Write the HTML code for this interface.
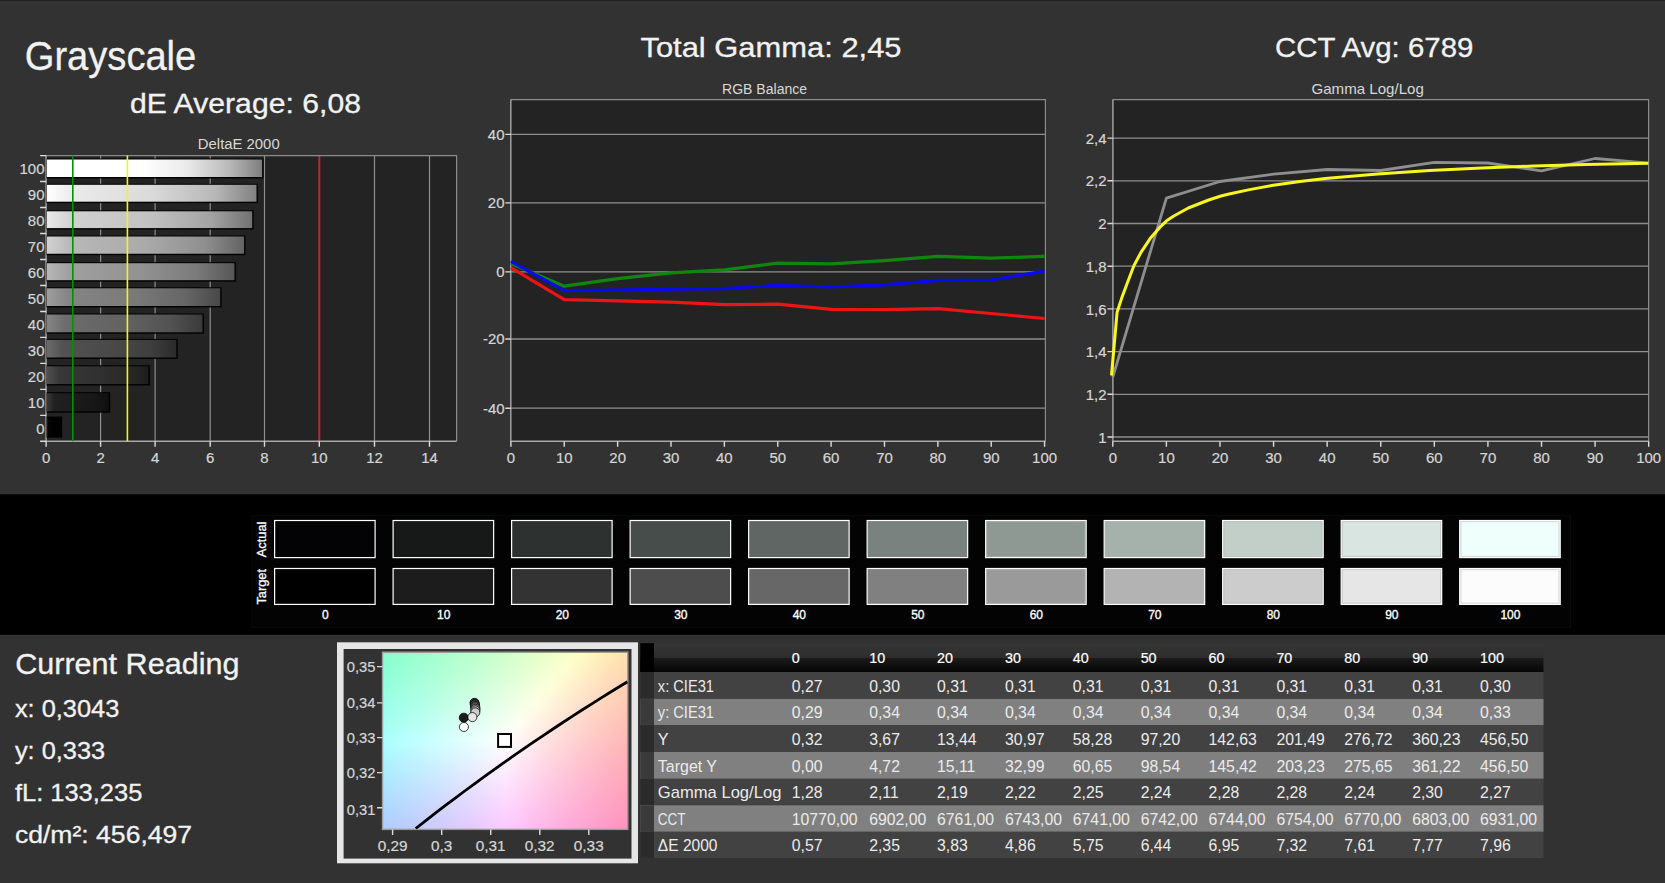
<!DOCTYPE html>
<html lang="en"><head><meta charset="utf-8"><title>Grayscale</title>
<style>html,body{margin:0;padding:0;background:#323232;overflow:hidden}svg{display:block}text{font-family:"Liberation Sans",sans-serif;white-space:pre}</style>
</head><body>
<svg width="1665" height="883" viewBox="0 0 1665 883">
<defs>
<linearGradient id="b0"><stop offset="0" stop-color="#ffffff"/><stop offset="0.45" stop-color="#ffffff"/><stop offset="0.65" stop-color="#eaeaea"/><stop offset="0.85" stop-color="#b8b8b8"/><stop offset="1" stop-color="#7e7e7e"/></linearGradient>
<linearGradient id="b1"><stop offset="0" stop-color="#ffffff"/><stop offset="0.12" stop-color="#ebebeb"/><stop offset="0.5" stop-color="#dadada"/><stop offset="0.8" stop-color="#b8b8b8"/><stop offset="1" stop-color="#818181"/></linearGradient>
<linearGradient id="b2"><stop offset="0" stop-color="#eaeaea"/><stop offset="0.12" stop-color="#d1d1d1"/><stop offset="0.5" stop-color="#c2c2c2"/><stop offset="0.8" stop-color="#a3a3a3"/><stop offset="1" stop-color="#727272"/></linearGradient>
<linearGradient id="b3"><stop offset="0" stop-color="#d1d1d1"/><stop offset="0.12" stop-color="#b8b8b8"/><stop offset="0.5" stop-color="#aaaaaa"/><stop offset="0.8" stop-color="#8f8f8f"/><stop offset="1" stop-color="#646464"/></linearGradient>
<linearGradient id="b4"><stop offset="0" stop-color="#b8b8b8"/><stop offset="0.12" stop-color="#9f9f9f"/><stop offset="0.5" stop-color="#929292"/><stop offset="0.8" stop-color="#7b7b7b"/><stop offset="1" stop-color="#565656"/></linearGradient>
<linearGradient id="b5"><stop offset="0" stop-color="#9e9e9e"/><stop offset="0.12" stop-color="#858585"/><stop offset="0.5" stop-color="#7a7a7a"/><stop offset="0.8" stop-color="#666666"/><stop offset="1" stop-color="#484848"/></linearGradient>
<linearGradient id="b6"><stop offset="0" stop-color="#858585"/><stop offset="0.12" stop-color="#6c6c6c"/><stop offset="0.5" stop-color="#626262"/><stop offset="0.8" stop-color="#525252"/><stop offset="1" stop-color="#3a3a3a"/></linearGradient>
<linearGradient id="b7"><stop offset="0" stop-color="#6b6b6b"/><stop offset="0.12" stop-color="#525252"/><stop offset="0.5" stop-color="#494949"/><stop offset="0.8" stop-color="#3e3e3e"/><stop offset="1" stop-color="#2b2b2b"/></linearGradient>
<linearGradient id="b8"><stop offset="0" stop-color="#515151"/><stop offset="0.12" stop-color="#383838"/><stop offset="0.5" stop-color="#303030"/><stop offset="0.8" stop-color="#292929"/><stop offset="1" stop-color="#1d1d1d"/></linearGradient>
<linearGradient id="b9"><stop offset="0" stop-color="#3a3a3a"/><stop offset="0.12" stop-color="#212121"/><stop offset="0.5" stop-color="#1b1b1b"/><stop offset="0.8" stop-color="#161616"/><stop offset="1" stop-color="#101010"/></linearGradient>
<linearGradient id="b10"><stop offset="0" stop-color="#1e1e1e"/><stop offset="0.12" stop-color="#050505"/><stop offset="0.5" stop-color="#000000"/><stop offset="0.8" stop-color="#000000"/><stop offset="1" stop-color="#000000"/></linearGradient>
<linearGradient id="c0" gradientUnits="userSpaceOnUse" x1="382.5" x2="627.8" y1="0" y2="0"><stop offset="0" stop-color="#86ffce"/><stop offset="0.0625" stop-color="#8fffcd"/><stop offset="0.125" stop-color="#98ffcd"/><stop offset="0.1875" stop-color="#a1ffcd"/><stop offset="0.25" stop-color="#aaffcc"/><stop offset="0.3125" stop-color="#b3ffcc"/><stop offset="0.375" stop-color="#bcffcc"/><stop offset="0.4375" stop-color="#c6ffcb"/><stop offset="0.5" stop-color="#cfffcb"/><stop offset="0.5625" stop-color="#d9ffca"/><stop offset="0.625" stop-color="#e3ffca"/><stop offset="0.6875" stop-color="#edffc9"/><stop offset="0.75" stop-color="#f7ffc9"/><stop offset="0.8125" stop-color="#fffcc6"/><stop offset="0.875" stop-color="#fff2be"/><stop offset="0.9375" stop-color="#ffe9b6"/><stop offset="1" stop-color="#ffe0af"/></linearGradient>
<linearGradient id="c1" gradientUnits="userSpaceOnUse" x1="382.5" x2="627.8" y1="0" y2="0"><stop offset="0" stop-color="#88ffcf"/><stop offset="0.0625" stop-color="#90ffcf"/><stop offset="0.125" stop-color="#99ffcf"/><stop offset="0.1875" stop-color="#a2ffce"/><stop offset="0.25" stop-color="#abffce"/><stop offset="0.3125" stop-color="#b4ffcd"/><stop offset="0.375" stop-color="#bdffcd"/><stop offset="0.4375" stop-color="#c7ffcd"/><stop offset="0.5" stop-color="#d1ffcc"/><stop offset="0.5625" stop-color="#dbffcc"/><stop offset="0.625" stop-color="#e5ffcb"/><stop offset="0.6875" stop-color="#efffcb"/><stop offset="0.75" stop-color="#f9ffcb"/><stop offset="0.8125" stop-color="#fffac7"/><stop offset="0.875" stop-color="#fff0be"/><stop offset="0.9375" stop-color="#ffe7b6"/><stop offset="1" stop-color="#ffdeaf"/></linearGradient>
<linearGradient id="c2" gradientUnits="userSpaceOnUse" x1="382.5" x2="627.8" y1="0" y2="0"><stop offset="0" stop-color="#89ffd1"/><stop offset="0.0625" stop-color="#91ffd1"/><stop offset="0.125" stop-color="#9affd0"/><stop offset="0.1875" stop-color="#a3ffd0"/><stop offset="0.25" stop-color="#acffcf"/><stop offset="0.3125" stop-color="#b5ffcf"/><stop offset="0.375" stop-color="#bfffcf"/><stop offset="0.4375" stop-color="#c8ffce"/><stop offset="0.5" stop-color="#d2ffce"/><stop offset="0.5625" stop-color="#dcffcd"/><stop offset="0.625" stop-color="#e6ffcd"/><stop offset="0.6875" stop-color="#f0ffcd"/><stop offset="0.75" stop-color="#fbffcc"/><stop offset="0.8125" stop-color="#fff9c7"/><stop offset="0.875" stop-color="#ffefbe"/><stop offset="0.9375" stop-color="#ffe6b7"/><stop offset="1" stop-color="#ffddaf"/></linearGradient>
<linearGradient id="c3" gradientUnits="userSpaceOnUse" x1="382.5" x2="627.8" y1="0" y2="0"><stop offset="0" stop-color="#8affd2"/><stop offset="0.0625" stop-color="#92ffd2"/><stop offset="0.125" stop-color="#9bffd2"/><stop offset="0.1875" stop-color="#a4ffd1"/><stop offset="0.25" stop-color="#adffd1"/><stop offset="0.3125" stop-color="#b7ffd1"/><stop offset="0.375" stop-color="#c0ffd0"/><stop offset="0.4375" stop-color="#caffd0"/><stop offset="0.5" stop-color="#d4ffcf"/><stop offset="0.5625" stop-color="#deffcf"/><stop offset="0.625" stop-color="#e8ffcf"/><stop offset="0.6875" stop-color="#f2ffce"/><stop offset="0.75" stop-color="#fdffce"/><stop offset="0.8125" stop-color="#fff7c7"/><stop offset="0.875" stop-color="#ffedbf"/><stop offset="0.9375" stop-color="#ffe4b7"/><stop offset="1" stop-color="#ffdbb0"/></linearGradient>
<linearGradient id="c4" gradientUnits="userSpaceOnUse" x1="382.5" x2="627.8" y1="0" y2="0"><stop offset="0" stop-color="#8bffd4"/><stop offset="0.0625" stop-color="#94ffd4"/><stop offset="0.125" stop-color="#9dffd3"/><stop offset="0.1875" stop-color="#a6ffd3"/><stop offset="0.25" stop-color="#afffd3"/><stop offset="0.3125" stop-color="#b8ffd2"/><stop offset="0.375" stop-color="#c2ffd2"/><stop offset="0.4375" stop-color="#cbffd1"/><stop offset="0.5" stop-color="#d5ffd1"/><stop offset="0.5625" stop-color="#dfffd1"/><stop offset="0.625" stop-color="#e9ffd0"/><stop offset="0.6875" stop-color="#f4ffd0"/><stop offset="0.75" stop-color="#feffd0"/><stop offset="0.8125" stop-color="#fff5c7"/><stop offset="0.875" stop-color="#ffecbf"/><stop offset="0.9375" stop-color="#ffe2b7"/><stop offset="1" stop-color="#ffdab0"/></linearGradient>
<linearGradient id="c5" gradientUnits="userSpaceOnUse" x1="382.5" x2="627.8" y1="0" y2="0"><stop offset="0" stop-color="#8cffd5"/><stop offset="0.0625" stop-color="#95ffd5"/><stop offset="0.125" stop-color="#9effd5"/><stop offset="0.1875" stop-color="#a7ffd4"/><stop offset="0.25" stop-color="#b0ffd4"/><stop offset="0.3125" stop-color="#b9ffd4"/><stop offset="0.375" stop-color="#c3ffd3"/><stop offset="0.4375" stop-color="#cdffd3"/><stop offset="0.5" stop-color="#d7ffd3"/><stop offset="0.5625" stop-color="#e1ffd2"/><stop offset="0.625" stop-color="#ebffd2"/><stop offset="0.6875" stop-color="#f5ffd2"/><stop offset="0.75" stop-color="#fffed0"/><stop offset="0.8125" stop-color="#fff4c8"/><stop offset="0.875" stop-color="#ffeabf"/><stop offset="0.9375" stop-color="#ffe1b8"/><stop offset="1" stop-color="#ffd8b0"/></linearGradient>
<linearGradient id="c6" gradientUnits="userSpaceOnUse" x1="382.5" x2="627.8" y1="0" y2="0"><stop offset="0" stop-color="#8dffd7"/><stop offset="0.0625" stop-color="#96ffd7"/><stop offset="0.125" stop-color="#9fffd6"/><stop offset="0.1875" stop-color="#a8ffd6"/><stop offset="0.25" stop-color="#b1ffd6"/><stop offset="0.3125" stop-color="#bbffd5"/><stop offset="0.375" stop-color="#c4ffd5"/><stop offset="0.4375" stop-color="#ceffd5"/><stop offset="0.5" stop-color="#d8ffd4"/><stop offset="0.5625" stop-color="#e2ffd4"/><stop offset="0.625" stop-color="#edffd4"/><stop offset="0.6875" stop-color="#f7ffd3"/><stop offset="0.75" stop-color="#fffcd1"/><stop offset="0.8125" stop-color="#fff2c8"/><stop offset="0.875" stop-color="#ffe8c0"/><stop offset="0.9375" stop-color="#ffdfb8"/><stop offset="1" stop-color="#ffd7b1"/></linearGradient>
<linearGradient id="c7" gradientUnits="userSpaceOnUse" x1="382.5" x2="627.8" y1="0" y2="0"><stop offset="0" stop-color="#8effd9"/><stop offset="0.0625" stop-color="#97ffd8"/><stop offset="0.125" stop-color="#a0ffd8"/><stop offset="0.1875" stop-color="#a9ffd8"/><stop offset="0.25" stop-color="#b3ffd7"/><stop offset="0.3125" stop-color="#bcffd7"/><stop offset="0.375" stop-color="#c6ffd7"/><stop offset="0.4375" stop-color="#d0ffd6"/><stop offset="0.5" stop-color="#daffd6"/><stop offset="0.5625" stop-color="#e4ffd6"/><stop offset="0.625" stop-color="#eeffd5"/><stop offset="0.6875" stop-color="#f9ffd5"/><stop offset="0.75" stop-color="#fffad1"/><stop offset="0.8125" stop-color="#fff0c8"/><stop offset="0.875" stop-color="#ffe7c0"/><stop offset="0.9375" stop-color="#ffdeb8"/><stop offset="1" stop-color="#ffd6b1"/></linearGradient>
<linearGradient id="c8" gradientUnits="userSpaceOnUse" x1="382.5" x2="627.8" y1="0" y2="0"><stop offset="0" stop-color="#8fffda"/><stop offset="0.0625" stop-color="#98ffda"/><stop offset="0.125" stop-color="#a1ffda"/><stop offset="0.1875" stop-color="#abffd9"/><stop offset="0.25" stop-color="#b4ffd9"/><stop offset="0.3125" stop-color="#beffd9"/><stop offset="0.375" stop-color="#c7ffd8"/><stop offset="0.4375" stop-color="#d1ffd8"/><stop offset="0.5" stop-color="#dbffd8"/><stop offset="0.5625" stop-color="#e6ffd7"/><stop offset="0.625" stop-color="#f0ffd7"/><stop offset="0.6875" stop-color="#fbffd7"/><stop offset="0.75" stop-color="#fff9d1"/><stop offset="0.8125" stop-color="#ffefc8"/><stop offset="0.875" stop-color="#ffe5c0"/><stop offset="0.9375" stop-color="#ffdcb8"/><stop offset="1" stop-color="#ffd4b1"/></linearGradient>
<linearGradient id="c9" gradientUnits="userSpaceOnUse" x1="382.5" x2="627.8" y1="0" y2="0"><stop offset="0" stop-color="#91ffdc"/><stop offset="0.0625" stop-color="#9affdb"/><stop offset="0.125" stop-color="#a3ffdb"/><stop offset="0.1875" stop-color="#acffdb"/><stop offset="0.25" stop-color="#b5ffdb"/><stop offset="0.3125" stop-color="#bfffda"/><stop offset="0.375" stop-color="#c9ffda"/><stop offset="0.4375" stop-color="#d3ffda"/><stop offset="0.5" stop-color="#ddffd9"/><stop offset="0.5625" stop-color="#e7ffd9"/><stop offset="0.625" stop-color="#f2ffd9"/><stop offset="0.6875" stop-color="#fcffd8"/><stop offset="0.75" stop-color="#fff7d1"/><stop offset="0.8125" stop-color="#ffedc9"/><stop offset="0.875" stop-color="#ffe4c0"/><stop offset="0.9375" stop-color="#ffdbb9"/><stop offset="1" stop-color="#ffd3b1"/></linearGradient>
<linearGradient id="c10" gradientUnits="userSpaceOnUse" x1="382.5" x2="627.8" y1="0" y2="0"><stop offset="0" stop-color="#92ffdd"/><stop offset="0.0625" stop-color="#9bffdd"/><stop offset="0.125" stop-color="#a4ffdd"/><stop offset="0.1875" stop-color="#adffdd"/><stop offset="0.25" stop-color="#b7ffdc"/><stop offset="0.3125" stop-color="#c0ffdc"/><stop offset="0.375" stop-color="#caffdc"/><stop offset="0.4375" stop-color="#d4ffdb"/><stop offset="0.5" stop-color="#deffdb"/><stop offset="0.5625" stop-color="#e9ffdb"/><stop offset="0.625" stop-color="#f3ffdb"/><stop offset="0.6875" stop-color="#feffda"/><stop offset="0.75" stop-color="#fff5d2"/><stop offset="0.8125" stop-color="#ffebc9"/><stop offset="0.875" stop-color="#ffe2c1"/><stop offset="0.9375" stop-color="#ffd9b9"/><stop offset="1" stop-color="#ffd1b2"/></linearGradient>
<linearGradient id="c11" gradientUnits="userSpaceOnUse" x1="382.5" x2="627.8" y1="0" y2="0"><stop offset="0" stop-color="#93ffdf"/><stop offset="0.0625" stop-color="#9cffdf"/><stop offset="0.125" stop-color="#a5ffde"/><stop offset="0.1875" stop-color="#afffde"/><stop offset="0.25" stop-color="#b8ffde"/><stop offset="0.3125" stop-color="#c2ffde"/><stop offset="0.375" stop-color="#ccffdd"/><stop offset="0.4375" stop-color="#d6ffdd"/><stop offset="0.5" stop-color="#e0ffdd"/><stop offset="0.5625" stop-color="#ebffdd"/><stop offset="0.625" stop-color="#f5ffdc"/><stop offset="0.6875" stop-color="#fffedb"/><stop offset="0.75" stop-color="#fff4d2"/><stop offset="0.8125" stop-color="#ffeac9"/><stop offset="0.875" stop-color="#ffe1c1"/><stop offset="0.9375" stop-color="#ffd8b9"/><stop offset="1" stop-color="#ffd0b2"/></linearGradient>
<linearGradient id="c12" gradientUnits="userSpaceOnUse" x1="382.5" x2="627.8" y1="0" y2="0"><stop offset="0" stop-color="#94ffe1"/><stop offset="0.0625" stop-color="#9dffe0"/><stop offset="0.125" stop-color="#a7ffe0"/><stop offset="0.1875" stop-color="#b0ffe0"/><stop offset="0.25" stop-color="#baffe0"/><stop offset="0.3125" stop-color="#c3ffdf"/><stop offset="0.375" stop-color="#cdffdf"/><stop offset="0.4375" stop-color="#d7ffdf"/><stop offset="0.5" stop-color="#e2ffdf"/><stop offset="0.5625" stop-color="#ecffde"/><stop offset="0.625" stop-color="#f7ffde"/><stop offset="0.6875" stop-color="#fffcdb"/><stop offset="0.75" stop-color="#fff2d2"/><stop offset="0.8125" stop-color="#ffe8c9"/><stop offset="0.875" stop-color="#ffdfc1"/><stop offset="0.9375" stop-color="#ffd6ba"/><stop offset="1" stop-color="#ffceb2"/></linearGradient>
<linearGradient id="c13" gradientUnits="userSpaceOnUse" x1="382.5" x2="627.8" y1="0" y2="0"><stop offset="0" stop-color="#95ffe2"/><stop offset="0.0625" stop-color="#9fffe2"/><stop offset="0.125" stop-color="#a8ffe2"/><stop offset="0.1875" stop-color="#b1ffe2"/><stop offset="0.25" stop-color="#bbffe1"/><stop offset="0.3125" stop-color="#c5ffe1"/><stop offset="0.375" stop-color="#cfffe1"/><stop offset="0.4375" stop-color="#d9ffe1"/><stop offset="0.5" stop-color="#e3ffe0"/><stop offset="0.5625" stop-color="#eeffe0"/><stop offset="0.625" stop-color="#f9ffe0"/><stop offset="0.6875" stop-color="#fffbdc"/><stop offset="0.75" stop-color="#fff0d2"/><stop offset="0.8125" stop-color="#ffe7ca"/><stop offset="0.875" stop-color="#ffdec1"/><stop offset="0.9375" stop-color="#ffd5ba"/><stop offset="1" stop-color="#ffcdb3"/></linearGradient>
<linearGradient id="c14" gradientUnits="userSpaceOnUse" x1="382.5" x2="627.8" y1="0" y2="0"><stop offset="0" stop-color="#97ffe4"/><stop offset="0.0625" stop-color="#a0ffe4"/><stop offset="0.125" stop-color="#a9ffe3"/><stop offset="0.1875" stop-color="#b3ffe3"/><stop offset="0.25" stop-color="#bcffe3"/><stop offset="0.3125" stop-color="#c6ffe3"/><stop offset="0.375" stop-color="#d0ffe3"/><stop offset="0.4375" stop-color="#dbffe2"/><stop offset="0.5" stop-color="#e5ffe2"/><stop offset="0.5625" stop-color="#f0ffe2"/><stop offset="0.625" stop-color="#faffe2"/><stop offset="0.6875" stop-color="#fff9dc"/><stop offset="0.75" stop-color="#ffefd3"/><stop offset="0.8125" stop-color="#ffe5ca"/><stop offset="0.875" stop-color="#ffdcc2"/><stop offset="0.9375" stop-color="#ffd3ba"/><stop offset="1" stop-color="#ffccb3"/></linearGradient>
<linearGradient id="c15" gradientUnits="userSpaceOnUse" x1="382.5" x2="627.8" y1="0" y2="0"><stop offset="0" stop-color="#98ffe6"/><stop offset="0.0625" stop-color="#a1ffe5"/><stop offset="0.125" stop-color="#aaffe5"/><stop offset="0.1875" stop-color="#b4ffe5"/><stop offset="0.25" stop-color="#beffe5"/><stop offset="0.3125" stop-color="#c8ffe5"/><stop offset="0.375" stop-color="#d2ffe4"/><stop offset="0.4375" stop-color="#dcffe4"/><stop offset="0.5" stop-color="#e7ffe4"/><stop offset="0.5625" stop-color="#f1ffe4"/><stop offset="0.625" stop-color="#fcffe3"/><stop offset="0.6875" stop-color="#fff7dc"/><stop offset="0.75" stop-color="#ffedd3"/><stop offset="0.8125" stop-color="#ffe3ca"/><stop offset="0.875" stop-color="#ffdac2"/><stop offset="0.9375" stop-color="#ffd2ba"/><stop offset="1" stop-color="#ffcab3"/></linearGradient>
<linearGradient id="c16" gradientUnits="userSpaceOnUse" x1="382.5" x2="627.8" y1="0" y2="0"><stop offset="0" stop-color="#99ffe7"/><stop offset="0.0625" stop-color="#a2ffe7"/><stop offset="0.125" stop-color="#acffe7"/><stop offset="0.1875" stop-color="#b5ffe7"/><stop offset="0.25" stop-color="#bfffe6"/><stop offset="0.3125" stop-color="#c9ffe6"/><stop offset="0.375" stop-color="#d3ffe6"/><stop offset="0.4375" stop-color="#deffe6"/><stop offset="0.5" stop-color="#e8ffe6"/><stop offset="0.5625" stop-color="#f3ffe5"/><stop offset="0.625" stop-color="#feffe5"/><stop offset="0.6875" stop-color="#fff5dc"/><stop offset="0.75" stop-color="#ffebd3"/><stop offset="0.8125" stop-color="#ffe2ca"/><stop offset="0.875" stop-color="#ffd9c2"/><stop offset="0.9375" stop-color="#ffd1bb"/><stop offset="1" stop-color="#ffc9b3"/></linearGradient>
<linearGradient id="c17" gradientUnits="userSpaceOnUse" x1="382.5" x2="627.8" y1="0" y2="0"><stop offset="0" stop-color="#9affe9"/><stop offset="0.0625" stop-color="#a4ffe9"/><stop offset="0.125" stop-color="#adffe9"/><stop offset="0.1875" stop-color="#b7ffe8"/><stop offset="0.25" stop-color="#c1ffe8"/><stop offset="0.3125" stop-color="#cbffe8"/><stop offset="0.375" stop-color="#d5ffe8"/><stop offset="0.4375" stop-color="#dfffe8"/><stop offset="0.5" stop-color="#eaffe8"/><stop offset="0.5625" stop-color="#f5ffe7"/><stop offset="0.625" stop-color="#fffee6"/><stop offset="0.6875" stop-color="#fff4dd"/><stop offset="0.75" stop-color="#ffead3"/><stop offset="0.8125" stop-color="#ffe0cb"/><stop offset="0.875" stop-color="#ffd7c3"/><stop offset="0.9375" stop-color="#ffcfbb"/><stop offset="1" stop-color="#ffc7b4"/></linearGradient>
<linearGradient id="c18" gradientUnits="userSpaceOnUse" x1="382.5" x2="627.8" y1="0" y2="0"><stop offset="0" stop-color="#9bffeb"/><stop offset="0.0625" stop-color="#a5ffeb"/><stop offset="0.125" stop-color="#aeffea"/><stop offset="0.1875" stop-color="#b8ffea"/><stop offset="0.25" stop-color="#c2ffea"/><stop offset="0.3125" stop-color="#ccffea"/><stop offset="0.375" stop-color="#d7ffea"/><stop offset="0.4375" stop-color="#e1ffea"/><stop offset="0.5" stop-color="#ecffe9"/><stop offset="0.5625" stop-color="#f7ffe9"/><stop offset="0.625" stop-color="#fffce7"/><stop offset="0.6875" stop-color="#fff2dd"/><stop offset="0.75" stop-color="#ffe8d4"/><stop offset="0.8125" stop-color="#ffdfcb"/><stop offset="0.875" stop-color="#ffd6c3"/><stop offset="0.9375" stop-color="#ffcebb"/><stop offset="1" stop-color="#ffc6b4"/></linearGradient>
<linearGradient id="c19" gradientUnits="userSpaceOnUse" x1="382.5" x2="627.8" y1="0" y2="0"><stop offset="0" stop-color="#9dffec"/><stop offset="0.0625" stop-color="#a6ffec"/><stop offset="0.125" stop-color="#b0ffec"/><stop offset="0.1875" stop-color="#baffec"/><stop offset="0.25" stop-color="#c4ffec"/><stop offset="0.3125" stop-color="#ceffec"/><stop offset="0.375" stop-color="#d8ffec"/><stop offset="0.4375" stop-color="#e3ffeb"/><stop offset="0.5" stop-color="#edffeb"/><stop offset="0.5625" stop-color="#f8ffeb"/><stop offset="0.625" stop-color="#fffbe7"/><stop offset="0.6875" stop-color="#fff0dd"/><stop offset="0.75" stop-color="#ffe6d4"/><stop offset="0.8125" stop-color="#ffddcb"/><stop offset="0.875" stop-color="#ffd4c3"/><stop offset="0.9375" stop-color="#ffccbb"/><stop offset="1" stop-color="#ffc5b4"/></linearGradient>
<linearGradient id="c20" gradientUnits="userSpaceOnUse" x1="382.5" x2="627.8" y1="0" y2="0"><stop offset="0" stop-color="#9effee"/><stop offset="0.0625" stop-color="#a8ffee"/><stop offset="0.125" stop-color="#b1ffee"/><stop offset="0.1875" stop-color="#bbffee"/><stop offset="0.25" stop-color="#c5ffee"/><stop offset="0.3125" stop-color="#cfffed"/><stop offset="0.375" stop-color="#daffed"/><stop offset="0.4375" stop-color="#e4ffed"/><stop offset="0.5" stop-color="#efffed"/><stop offset="0.5625" stop-color="#faffed"/><stop offset="0.625" stop-color="#fff9e7"/><stop offset="0.6875" stop-color="#ffeedd"/><stop offset="0.75" stop-color="#ffe5d4"/><stop offset="0.8125" stop-color="#ffdccb"/><stop offset="0.875" stop-color="#ffd3c3"/><stop offset="0.9375" stop-color="#ffcbbc"/><stop offset="1" stop-color="#ffc3b4"/></linearGradient>
<linearGradient id="c21" gradientUnits="userSpaceOnUse" x1="382.5" x2="627.8" y1="0" y2="0"><stop offset="0" stop-color="#9ffff0"/><stop offset="0.0625" stop-color="#a9fff0"/><stop offset="0.125" stop-color="#b3fff0"/><stop offset="0.1875" stop-color="#bdfff0"/><stop offset="0.25" stop-color="#c7ffef"/><stop offset="0.3125" stop-color="#d1ffef"/><stop offset="0.375" stop-color="#dbffef"/><stop offset="0.4375" stop-color="#e6ffef"/><stop offset="0.5" stop-color="#f1ffef"/><stop offset="0.5625" stop-color="#fcffef"/><stop offset="0.625" stop-color="#fff7e7"/><stop offset="0.6875" stop-color="#ffeddd"/><stop offset="0.75" stop-color="#ffe3d4"/><stop offset="0.8125" stop-color="#ffdacc"/><stop offset="0.875" stop-color="#ffd1c4"/><stop offset="0.9375" stop-color="#ffc9bc"/><stop offset="1" stop-color="#ffc2b5"/></linearGradient>
<linearGradient id="c22" gradientUnits="userSpaceOnUse" x1="382.5" x2="627.8" y1="0" y2="0"><stop offset="0" stop-color="#a1fff2"/><stop offset="0.0625" stop-color="#aafff2"/><stop offset="0.125" stop-color="#b4fff1"/><stop offset="0.1875" stop-color="#befff1"/><stop offset="0.25" stop-color="#c8fff1"/><stop offset="0.3125" stop-color="#d3fff1"/><stop offset="0.375" stop-color="#ddfff1"/><stop offset="0.4375" stop-color="#e8fff1"/><stop offset="0.5" stop-color="#f3fff1"/><stop offset="0.5625" stop-color="#fefff1"/><stop offset="0.625" stop-color="#fff5e7"/><stop offset="0.6875" stop-color="#ffebde"/><stop offset="0.75" stop-color="#ffe1d4"/><stop offset="0.8125" stop-color="#ffd8cc"/><stop offset="0.875" stop-color="#ffd0c4"/><stop offset="0.9375" stop-color="#ffc8bc"/><stop offset="1" stop-color="#ffc0b5"/></linearGradient>
<linearGradient id="c23" gradientUnits="userSpaceOnUse" x1="382.5" x2="627.8" y1="0" y2="0"><stop offset="0" stop-color="#a2fff3"/><stop offset="0.0625" stop-color="#acfff3"/><stop offset="0.125" stop-color="#b5fff3"/><stop offset="0.1875" stop-color="#bffff3"/><stop offset="0.25" stop-color="#cafff3"/><stop offset="0.3125" stop-color="#d4fff3"/><stop offset="0.375" stop-color="#dffff3"/><stop offset="0.4375" stop-color="#e9fff3"/><stop offset="0.5" stop-color="#f4fff3"/><stop offset="0.5625" stop-color="#fffef2"/><stop offset="0.625" stop-color="#fff3e8"/><stop offset="0.6875" stop-color="#ffe9de"/><stop offset="0.75" stop-color="#ffe0d5"/><stop offset="0.8125" stop-color="#ffd7cc"/><stop offset="0.875" stop-color="#ffcec4"/><stop offset="0.9375" stop-color="#ffc7bc"/><stop offset="1" stop-color="#ffbfb5"/></linearGradient>
<linearGradient id="c24" gradientUnits="userSpaceOnUse" x1="382.5" x2="627.8" y1="0" y2="0"><stop offset="0" stop-color="#a3fff5"/><stop offset="0.0625" stop-color="#adfff5"/><stop offset="0.125" stop-color="#b7fff5"/><stop offset="0.1875" stop-color="#c1fff5"/><stop offset="0.25" stop-color="#cbfff5"/><stop offset="0.3125" stop-color="#d6fff5"/><stop offset="0.375" stop-color="#e0fff5"/><stop offset="0.4375" stop-color="#ebfff5"/><stop offset="0.5" stop-color="#f6fff5"/><stop offset="0.5625" stop-color="#fffdf2"/><stop offset="0.625" stop-color="#fff2e8"/><stop offset="0.6875" stop-color="#ffe8de"/><stop offset="0.75" stop-color="#ffded5"/><stop offset="0.8125" stop-color="#ffd5cc"/><stop offset="0.875" stop-color="#ffcdc4"/><stop offset="0.9375" stop-color="#ffc5bd"/><stop offset="1" stop-color="#ffbeb6"/></linearGradient>
<linearGradient id="c25" gradientUnits="userSpaceOnUse" x1="382.5" x2="627.8" y1="0" y2="0"><stop offset="0" stop-color="#a5fff7"/><stop offset="0.0625" stop-color="#aefff7"/><stop offset="0.125" stop-color="#b8fff7"/><stop offset="0.1875" stop-color="#c2fff7"/><stop offset="0.25" stop-color="#cdfff7"/><stop offset="0.3125" stop-color="#d7fff7"/><stop offset="0.375" stop-color="#e2fff7"/><stop offset="0.4375" stop-color="#edfff7"/><stop offset="0.5" stop-color="#f8fff7"/><stop offset="0.5625" stop-color="#fffbf2"/><stop offset="0.625" stop-color="#fff0e8"/><stop offset="0.6875" stop-color="#ffe6de"/><stop offset="0.75" stop-color="#ffddd5"/><stop offset="0.8125" stop-color="#ffd4cd"/><stop offset="0.875" stop-color="#ffccc5"/><stop offset="0.9375" stop-color="#ffc4bd"/><stop offset="1" stop-color="#ffbcb6"/></linearGradient>
<linearGradient id="c26" gradientUnits="userSpaceOnUse" x1="382.5" x2="627.8" y1="0" y2="0"><stop offset="0" stop-color="#a6fff9"/><stop offset="0.0625" stop-color="#b0fff9"/><stop offset="0.125" stop-color="#bafff9"/><stop offset="0.1875" stop-color="#c4fff9"/><stop offset="0.25" stop-color="#cefff9"/><stop offset="0.3125" stop-color="#d9fff9"/><stop offset="0.375" stop-color="#e4fff9"/><stop offset="0.4375" stop-color="#effff9"/><stop offset="0.5" stop-color="#fafff9"/><stop offset="0.5625" stop-color="#fff9f3"/><stop offset="0.625" stop-color="#ffeee8"/><stop offset="0.6875" stop-color="#ffe4df"/><stop offset="0.75" stop-color="#ffdbd5"/><stop offset="0.8125" stop-color="#ffd2cd"/><stop offset="0.875" stop-color="#ffcac5"/><stop offset="0.9375" stop-color="#ffc2bd"/><stop offset="1" stop-color="#ffbbb6"/></linearGradient>
<linearGradient id="c27" gradientUnits="userSpaceOnUse" x1="382.5" x2="627.8" y1="0" y2="0"><stop offset="0" stop-color="#a7fffb"/><stop offset="0.0625" stop-color="#b1fffb"/><stop offset="0.125" stop-color="#bbfffb"/><stop offset="0.1875" stop-color="#c6fffb"/><stop offset="0.25" stop-color="#d0fffb"/><stop offset="0.3125" stop-color="#dbfffb"/><stop offset="0.375" stop-color="#e5fffb"/><stop offset="0.4375" stop-color="#f0fffb"/><stop offset="0.5" stop-color="#fcfffb"/><stop offset="0.5625" stop-color="#fff7f3"/><stop offset="0.625" stop-color="#ffede8"/><stop offset="0.6875" stop-color="#ffe3df"/><stop offset="0.75" stop-color="#ffd9d6"/><stop offset="0.8125" stop-color="#ffd1cd"/><stop offset="0.875" stop-color="#ffc9c5"/><stop offset="0.9375" stop-color="#ffc1be"/><stop offset="1" stop-color="#ffbab6"/></linearGradient>
<linearGradient id="c28" gradientUnits="userSpaceOnUse" x1="382.5" x2="627.8" y1="0" y2="0"><stop offset="0" stop-color="#a9fffd"/><stop offset="0.0625" stop-color="#b3fffd"/><stop offset="0.125" stop-color="#bdfffd"/><stop offset="0.1875" stop-color="#c7fffd"/><stop offset="0.25" stop-color="#d2fffd"/><stop offset="0.3125" stop-color="#dcfffd"/><stop offset="0.375" stop-color="#e7fffd"/><stop offset="0.4375" stop-color="#f2fffd"/><stop offset="0.5" stop-color="#fefffd"/><stop offset="0.5625" stop-color="#fff5f3"/><stop offset="0.625" stop-color="#ffebe9"/><stop offset="0.6875" stop-color="#ffe1df"/><stop offset="0.75" stop-color="#ffd8d6"/><stop offset="0.8125" stop-color="#ffcfcd"/><stop offset="0.875" stop-color="#ffc7c5"/><stop offset="0.9375" stop-color="#ffc0be"/><stop offset="1" stop-color="#ffb8b7"/></linearGradient>
<linearGradient id="c29" gradientUnits="userSpaceOnUse" x1="382.5" x2="627.8" y1="0" y2="0"><stop offset="0" stop-color="#aafffe"/><stop offset="0.0625" stop-color="#b4ffff"/><stop offset="0.125" stop-color="#beffff"/><stop offset="0.1875" stop-color="#c9ffff"/><stop offset="0.25" stop-color="#d3ffff"/><stop offset="0.3125" stop-color="#deffff"/><stop offset="0.375" stop-color="#e9ffff"/><stop offset="0.4375" stop-color="#f4ffff"/><stop offset="0.5" stop-color="#fffefe"/><stop offset="0.5625" stop-color="#fff3f3"/><stop offset="0.625" stop-color="#ffe9e9"/><stop offset="0.6875" stop-color="#ffdfdf"/><stop offset="0.75" stop-color="#ffd6d6"/><stop offset="0.8125" stop-color="#ffcece"/><stop offset="0.875" stop-color="#ffc6c6"/><stop offset="0.9375" stop-color="#ffbebe"/><stop offset="1" stop-color="#ffb7b7"/></linearGradient>
<linearGradient id="c30" gradientUnits="userSpaceOnUse" x1="382.5" x2="627.8" y1="0" y2="0"><stop offset="0" stop-color="#aafeff"/><stop offset="0.0625" stop-color="#b4feff"/><stop offset="0.125" stop-color="#bffeff"/><stop offset="0.1875" stop-color="#c9feff"/><stop offset="0.25" stop-color="#d4fdff"/><stop offset="0.3125" stop-color="#defdff"/><stop offset="0.375" stop-color="#e9fdff"/><stop offset="0.4375" stop-color="#f4fdff"/><stop offset="0.5" stop-color="#fffdfe"/><stop offset="0.5625" stop-color="#fff2f3"/><stop offset="0.625" stop-color="#ffe7e9"/><stop offset="0.6875" stop-color="#ffdedf"/><stop offset="0.75" stop-color="#ffd5d6"/><stop offset="0.8125" stop-color="#ffccce"/><stop offset="0.875" stop-color="#ffc4c6"/><stop offset="0.9375" stop-color="#ffbdbe"/><stop offset="1" stop-color="#ffb6b7"/></linearGradient>
<linearGradient id="c31" gradientUnits="userSpaceOnUse" x1="382.5" x2="627.8" y1="0" y2="0"><stop offset="0" stop-color="#abfcff"/><stop offset="0.0625" stop-color="#b5fcff"/><stop offset="0.125" stop-color="#bffcff"/><stop offset="0.1875" stop-color="#c9fcff"/><stop offset="0.25" stop-color="#d4fcff"/><stop offset="0.3125" stop-color="#defbff"/><stop offset="0.375" stop-color="#e9fbff"/><stop offset="0.4375" stop-color="#f4fbff"/><stop offset="0.5" stop-color="#fffbfe"/><stop offset="0.5625" stop-color="#fff0f3"/><stop offset="0.625" stop-color="#ffe6e9"/><stop offset="0.6875" stop-color="#ffdce0"/><stop offset="0.75" stop-color="#ffd3d7"/><stop offset="0.8125" stop-color="#ffcbce"/><stop offset="0.875" stop-color="#ffc3c6"/><stop offset="0.9375" stop-color="#ffbbbf"/><stop offset="1" stop-color="#ffb4b7"/></linearGradient>
<linearGradient id="c32" gradientUnits="userSpaceOnUse" x1="382.5" x2="627.8" y1="0" y2="0"><stop offset="0" stop-color="#abfaff"/><stop offset="0.0625" stop-color="#b5faff"/><stop offset="0.125" stop-color="#bffaff"/><stop offset="0.1875" stop-color="#c9faff"/><stop offset="0.25" stop-color="#d4faff"/><stop offset="0.3125" stop-color="#defaff"/><stop offset="0.375" stop-color="#e9f9ff"/><stop offset="0.4375" stop-color="#f4f9ff"/><stop offset="0.5" stop-color="#fff9ff"/><stop offset="0.5625" stop-color="#ffeef4"/><stop offset="0.625" stop-color="#ffe4e9"/><stop offset="0.6875" stop-color="#ffdbe0"/><stop offset="0.75" stop-color="#ffd2d7"/><stop offset="0.8125" stop-color="#ffc9ce"/><stop offset="0.875" stop-color="#ffc2c6"/><stop offset="0.9375" stop-color="#ffbabf"/><stop offset="1" stop-color="#ffb3b8"/></linearGradient>
<linearGradient id="c33" gradientUnits="userSpaceOnUse" x1="382.5" x2="627.8" y1="0" y2="0"><stop offset="0" stop-color="#abf8ff"/><stop offset="0.0625" stop-color="#b5f8ff"/><stop offset="0.125" stop-color="#bff8ff"/><stop offset="0.1875" stop-color="#c9f8ff"/><stop offset="0.25" stop-color="#d4f8ff"/><stop offset="0.3125" stop-color="#def8ff"/><stop offset="0.375" stop-color="#e9f7ff"/><stop offset="0.4375" stop-color="#f4f7ff"/><stop offset="0.5" stop-color="#fff7ff"/><stop offset="0.5625" stop-color="#ffecf4"/><stop offset="0.625" stop-color="#ffe2ea"/><stop offset="0.6875" stop-color="#ffd9e0"/><stop offset="0.75" stop-color="#ffd0d7"/><stop offset="0.8125" stop-color="#ffc8cf"/><stop offset="0.875" stop-color="#ffc0c7"/><stop offset="0.9375" stop-color="#ffb9bf"/><stop offset="1" stop-color="#ffb2b8"/></linearGradient>
<linearGradient id="c34" gradientUnits="userSpaceOnUse" x1="382.5" x2="627.8" y1="0" y2="0"><stop offset="0" stop-color="#abf6ff"/><stop offset="0.0625" stop-color="#b5f6ff"/><stop offset="0.125" stop-color="#bff6ff"/><stop offset="0.1875" stop-color="#c9f6ff"/><stop offset="0.25" stop-color="#d4f6ff"/><stop offset="0.3125" stop-color="#def6ff"/><stop offset="0.375" stop-color="#e9f6ff"/><stop offset="0.4375" stop-color="#f4f5ff"/><stop offset="0.5" stop-color="#fff5ff"/><stop offset="0.5625" stop-color="#ffebf4"/><stop offset="0.625" stop-color="#ffe1ea"/><stop offset="0.6875" stop-color="#ffd7e0"/><stop offset="0.75" stop-color="#ffcfd7"/><stop offset="0.8125" stop-color="#ffc6cf"/><stop offset="0.875" stop-color="#ffbfc7"/><stop offset="0.9375" stop-color="#ffb7bf"/><stop offset="1" stop-color="#ffb1b8"/></linearGradient>
<linearGradient id="c35" gradientUnits="userSpaceOnUse" x1="382.5" x2="627.8" y1="0" y2="0"><stop offset="0" stop-color="#abf4ff"/><stop offset="0.0625" stop-color="#b5f4ff"/><stop offset="0.125" stop-color="#bff4ff"/><stop offset="0.1875" stop-color="#c9f4ff"/><stop offset="0.25" stop-color="#d4f4ff"/><stop offset="0.3125" stop-color="#def4ff"/><stop offset="0.375" stop-color="#e9f4ff"/><stop offset="0.4375" stop-color="#f4f3ff"/><stop offset="0.5" stop-color="#fff3ff"/><stop offset="0.5625" stop-color="#ffe9f4"/><stop offset="0.625" stop-color="#ffdfea"/><stop offset="0.6875" stop-color="#ffd6e0"/><stop offset="0.75" stop-color="#ffcdd7"/><stop offset="0.8125" stop-color="#ffc5cf"/><stop offset="0.875" stop-color="#ffbdc7"/><stop offset="0.9375" stop-color="#ffb6c0"/><stop offset="1" stop-color="#ffafb8"/></linearGradient>
<linearGradient id="c36" gradientUnits="userSpaceOnUse" x1="382.5" x2="627.8" y1="0" y2="0"><stop offset="0" stop-color="#abf2ff"/><stop offset="0.0625" stop-color="#b5f2ff"/><stop offset="0.125" stop-color="#bff2ff"/><stop offset="0.1875" stop-color="#c9f2ff"/><stop offset="0.25" stop-color="#d4f2ff"/><stop offset="0.3125" stop-color="#def2ff"/><stop offset="0.375" stop-color="#e9f2ff"/><stop offset="0.4375" stop-color="#f4f2ff"/><stop offset="0.5" stop-color="#fff1ff"/><stop offset="0.5625" stop-color="#ffe7f4"/><stop offset="0.625" stop-color="#ffddea"/><stop offset="0.6875" stop-color="#ffd4e1"/><stop offset="0.75" stop-color="#ffccd8"/><stop offset="0.8125" stop-color="#ffc4cf"/><stop offset="0.875" stop-color="#ffbcc7"/><stop offset="0.9375" stop-color="#ffb5c0"/><stop offset="1" stop-color="#ffaeb9"/></linearGradient>
<linearGradient id="c37" gradientUnits="userSpaceOnUse" x1="382.5" x2="627.8" y1="0" y2="0"><stop offset="0" stop-color="#abf1ff"/><stop offset="0.0625" stop-color="#b5f1ff"/><stop offset="0.125" stop-color="#bff0ff"/><stop offset="0.1875" stop-color="#c9f0ff"/><stop offset="0.25" stop-color="#d3f0ff"/><stop offset="0.3125" stop-color="#def0ff"/><stop offset="0.375" stop-color="#e9f0ff"/><stop offset="0.4375" stop-color="#f4f0ff"/><stop offset="0.5" stop-color="#ffefff"/><stop offset="0.5625" stop-color="#ffe5f4"/><stop offset="0.625" stop-color="#ffdcea"/><stop offset="0.6875" stop-color="#ffd3e1"/><stop offset="0.75" stop-color="#ffcad8"/><stop offset="0.8125" stop-color="#ffc2cf"/><stop offset="0.875" stop-color="#ffbbc8"/><stop offset="0.9375" stop-color="#ffb3c0"/><stop offset="1" stop-color="#ffadb9"/></linearGradient>
<linearGradient id="c38" gradientUnits="userSpaceOnUse" x1="382.5" x2="627.8" y1="0" y2="0"><stop offset="0" stop-color="#abefff"/><stop offset="0.0625" stop-color="#b5efff"/><stop offset="0.125" stop-color="#bfefff"/><stop offset="0.1875" stop-color="#c9eeff"/><stop offset="0.25" stop-color="#d3eeff"/><stop offset="0.3125" stop-color="#deeeff"/><stop offset="0.375" stop-color="#e9eeff"/><stop offset="0.4375" stop-color="#f4eeff"/><stop offset="0.5" stop-color="#ffeeff"/><stop offset="0.5625" stop-color="#ffe4f5"/><stop offset="0.625" stop-color="#ffdaea"/><stop offset="0.6875" stop-color="#ffd1e1"/><stop offset="0.75" stop-color="#ffc9d8"/><stop offset="0.8125" stop-color="#ffc1d0"/><stop offset="0.875" stop-color="#ffb9c8"/><stop offset="0.9375" stop-color="#ffb2c0"/><stop offset="1" stop-color="#ffabb9"/></linearGradient>
<linearGradient id="c39" gradientUnits="userSpaceOnUse" x1="382.5" x2="627.8" y1="0" y2="0"><stop offset="0" stop-color="#acedff"/><stop offset="0.0625" stop-color="#b5edff"/><stop offset="0.125" stop-color="#bfedff"/><stop offset="0.1875" stop-color="#c9edff"/><stop offset="0.25" stop-color="#d3ecff"/><stop offset="0.3125" stop-color="#deecff"/><stop offset="0.375" stop-color="#e9ecff"/><stop offset="0.4375" stop-color="#f3ecff"/><stop offset="0.5" stop-color="#feecff"/><stop offset="0.5625" stop-color="#ffe2f5"/><stop offset="0.625" stop-color="#ffd8eb"/><stop offset="0.6875" stop-color="#ffcfe1"/><stop offset="0.75" stop-color="#ffc7d8"/><stop offset="0.8125" stop-color="#ffbfd0"/><stop offset="0.875" stop-color="#ffb8c8"/><stop offset="0.9375" stop-color="#ffb1c1"/><stop offset="1" stop-color="#ffaab9"/></linearGradient>
<linearGradient id="c40" gradientUnits="userSpaceOnUse" x1="382.5" x2="627.8" y1="0" y2="0"><stop offset="0" stop-color="#acebff"/><stop offset="0.0625" stop-color="#b5ebff"/><stop offset="0.125" stop-color="#bfebff"/><stop offset="0.1875" stop-color="#c9ebff"/><stop offset="0.25" stop-color="#d3ebff"/><stop offset="0.3125" stop-color="#deeaff"/><stop offset="0.375" stop-color="#e8eaff"/><stop offset="0.4375" stop-color="#f3eaff"/><stop offset="0.5" stop-color="#feeaff"/><stop offset="0.5625" stop-color="#ffe0f5"/><stop offset="0.625" stop-color="#ffd7eb"/><stop offset="0.6875" stop-color="#ffcee1"/><stop offset="0.75" stop-color="#ffc6d8"/><stop offset="0.8125" stop-color="#ffbed0"/><stop offset="0.875" stop-color="#ffb6c8"/><stop offset="0.9375" stop-color="#ffafc1"/><stop offset="1" stop-color="#ffa9ba"/></linearGradient>
<linearGradient id="c41" gradientUnits="userSpaceOnUse" x1="382.5" x2="627.8" y1="0" y2="0"><stop offset="0" stop-color="#aceaff"/><stop offset="0.0625" stop-color="#b5e9ff"/><stop offset="0.125" stop-color="#bfe9ff"/><stop offset="0.1875" stop-color="#c9e9ff"/><stop offset="0.25" stop-color="#d3e9ff"/><stop offset="0.3125" stop-color="#dee8ff"/><stop offset="0.375" stop-color="#e8e8ff"/><stop offset="0.4375" stop-color="#f3e8ff"/><stop offset="0.5" stop-color="#fee8ff"/><stop offset="0.5625" stop-color="#ffdff5"/><stop offset="0.625" stop-color="#ffd5eb"/><stop offset="0.6875" stop-color="#ffcce2"/><stop offset="0.75" stop-color="#ffc4d9"/><stop offset="0.8125" stop-color="#ffbcd0"/><stop offset="0.875" stop-color="#ffb5c8"/><stop offset="0.9375" stop-color="#ffaec1"/><stop offset="1" stop-color="#ffa8ba"/></linearGradient>
<linearGradient id="c42" gradientUnits="userSpaceOnUse" x1="382.5" x2="627.8" y1="0" y2="0"><stop offset="0" stop-color="#ace8ff"/><stop offset="0.0625" stop-color="#b5e8ff"/><stop offset="0.125" stop-color="#bfe7ff"/><stop offset="0.1875" stop-color="#c9e7ff"/><stop offset="0.25" stop-color="#d3e7ff"/><stop offset="0.3125" stop-color="#dee7ff"/><stop offset="0.375" stop-color="#e8e6ff"/><stop offset="0.4375" stop-color="#f3e6ff"/><stop offset="0.5" stop-color="#fee6ff"/><stop offset="0.5625" stop-color="#ffddf5"/><stop offset="0.625" stop-color="#ffd4eb"/><stop offset="0.6875" stop-color="#ffcbe2"/><stop offset="0.75" stop-color="#ffc3d9"/><stop offset="0.8125" stop-color="#ffbbd1"/><stop offset="0.875" stop-color="#ffb4c9"/><stop offset="0.9375" stop-color="#ffadc1"/><stop offset="1" stop-color="#ffa6ba"/></linearGradient>
<linearGradient id="c43" gradientUnits="userSpaceOnUse" x1="382.5" x2="627.8" y1="0" y2="0"><stop offset="0" stop-color="#ace6ff"/><stop offset="0.0625" stop-color="#b6e6ff"/><stop offset="0.125" stop-color="#bfe6ff"/><stop offset="0.1875" stop-color="#c9e5ff"/><stop offset="0.25" stop-color="#d3e5ff"/><stop offset="0.3125" stop-color="#dee5ff"/><stop offset="0.375" stop-color="#e8e5ff"/><stop offset="0.4375" stop-color="#f3e4ff"/><stop offset="0.5" stop-color="#fee4ff"/><stop offset="0.5625" stop-color="#ffdbf5"/><stop offset="0.625" stop-color="#ffd2eb"/><stop offset="0.6875" stop-color="#ffc9e2"/><stop offset="0.75" stop-color="#ffc1d9"/><stop offset="0.8125" stop-color="#ffbad1"/><stop offset="0.875" stop-color="#ffb2c9"/><stop offset="0.9375" stop-color="#ffacc2"/><stop offset="1" stop-color="#ffa5ba"/></linearGradient>
<linearGradient id="c44" gradientUnits="userSpaceOnUse" x1="382.5" x2="627.8" y1="0" y2="0"><stop offset="0" stop-color="#ace4ff"/><stop offset="0.0625" stop-color="#b6e4ff"/><stop offset="0.125" stop-color="#bfe4ff"/><stop offset="0.1875" stop-color="#c9e4ff"/><stop offset="0.25" stop-color="#d3e3ff"/><stop offset="0.3125" stop-color="#dee3ff"/><stop offset="0.375" stop-color="#e8e3ff"/><stop offset="0.4375" stop-color="#f3e2ff"/><stop offset="0.5" stop-color="#fee2ff"/><stop offset="0.5625" stop-color="#ffdaf6"/><stop offset="0.625" stop-color="#ffd0ec"/><stop offset="0.6875" stop-color="#ffc8e2"/><stop offset="0.75" stop-color="#ffc0d9"/><stop offset="0.8125" stop-color="#ffb8d1"/><stop offset="0.875" stop-color="#ffb1c9"/><stop offset="0.9375" stop-color="#ffaac2"/><stop offset="1" stop-color="#ffa4bb"/></linearGradient>
<linearGradient id="c45" gradientUnits="userSpaceOnUse" x1="382.5" x2="627.8" y1="0" y2="0"><stop offset="0" stop-color="#ace3ff"/><stop offset="0.0625" stop-color="#b6e2ff"/><stop offset="0.125" stop-color="#bfe2ff"/><stop offset="0.1875" stop-color="#c9e2ff"/><stop offset="0.25" stop-color="#d3e1ff"/><stop offset="0.3125" stop-color="#dee1ff"/><stop offset="0.375" stop-color="#e8e1ff"/><stop offset="0.4375" stop-color="#f3e1ff"/><stop offset="0.5" stop-color="#fee0ff"/><stop offset="0.5625" stop-color="#ffd8f6"/><stop offset="0.625" stop-color="#ffcfec"/><stop offset="0.6875" stop-color="#ffc6e2"/><stop offset="0.75" stop-color="#ffbeda"/><stop offset="0.8125" stop-color="#ffb7d1"/><stop offset="0.875" stop-color="#ffb0c9"/><stop offset="0.9375" stop-color="#ffa9c2"/><stop offset="1" stop-color="#ffa3bb"/></linearGradient>
<linearGradient id="c46" gradientUnits="userSpaceOnUse" x1="382.5" x2="627.8" y1="0" y2="0"><stop offset="0" stop-color="#ace1ff"/><stop offset="0.0625" stop-color="#b6e1ff"/><stop offset="0.125" stop-color="#c0e0ff"/><stop offset="0.1875" stop-color="#c9e0ff"/><stop offset="0.25" stop-color="#d3e0ff"/><stop offset="0.3125" stop-color="#dedfff"/><stop offset="0.375" stop-color="#e8dfff"/><stop offset="0.4375" stop-color="#f3dfff"/><stop offset="0.5" stop-color="#fddeff"/><stop offset="0.5625" stop-color="#ffd6f6"/><stop offset="0.625" stop-color="#ffcdec"/><stop offset="0.6875" stop-color="#ffc5e3"/><stop offset="0.75" stop-color="#ffbdda"/><stop offset="0.8125" stop-color="#ffb5d1"/><stop offset="0.875" stop-color="#ffaeca"/><stop offset="0.9375" stop-color="#ffa8c2"/><stop offset="1" stop-color="#ffa1bb"/></linearGradient>
<linearGradient id="c47" gradientUnits="userSpaceOnUse" x1="382.5" x2="627.8" y1="0" y2="0"><stop offset="0" stop-color="#acdfff"/><stop offset="0.0625" stop-color="#b6dfff"/><stop offset="0.125" stop-color="#c0dfff"/><stop offset="0.1875" stop-color="#c9deff"/><stop offset="0.25" stop-color="#d3deff"/><stop offset="0.3125" stop-color="#dedeff"/><stop offset="0.375" stop-color="#e8ddff"/><stop offset="0.4375" stop-color="#f3ddff"/><stop offset="0.5" stop-color="#fdddff"/><stop offset="0.5625" stop-color="#ffd5f6"/><stop offset="0.625" stop-color="#ffccec"/><stop offset="0.6875" stop-color="#ffc3e3"/><stop offset="0.75" stop-color="#ffbbda"/><stop offset="0.8125" stop-color="#ffb4d2"/><stop offset="0.875" stop-color="#ffadca"/><stop offset="0.9375" stop-color="#ffa6c2"/><stop offset="1" stop-color="#ffa0bb"/></linearGradient>
<linearGradient id="c48" gradientUnits="userSpaceOnUse" x1="382.5" x2="627.8" y1="0" y2="0"><stop offset="0" stop-color="#acddff"/><stop offset="0.0625" stop-color="#b6ddff"/><stop offset="0.125" stop-color="#c0ddff"/><stop offset="0.1875" stop-color="#c9dcff"/><stop offset="0.25" stop-color="#d3dcff"/><stop offset="0.3125" stop-color="#dedcff"/><stop offset="0.375" stop-color="#e8dbff"/><stop offset="0.4375" stop-color="#f2dbff"/><stop offset="0.5" stop-color="#fddbff"/><stop offset="0.5625" stop-color="#ffd3f6"/><stop offset="0.625" stop-color="#ffcaec"/><stop offset="0.6875" stop-color="#ffc2e3"/><stop offset="0.75" stop-color="#ffbada"/><stop offset="0.8125" stop-color="#ffb3d2"/><stop offset="0.875" stop-color="#ffacca"/><stop offset="0.9375" stop-color="#ffa5c3"/><stop offset="1" stop-color="#ff9fbc"/></linearGradient>
<linearGradient id="c49" gradientUnits="userSpaceOnUse" x1="382.5" x2="627.8" y1="0" y2="0"><stop offset="0" stop-color="#addcff"/><stop offset="0.0625" stop-color="#b6dbff"/><stop offset="0.125" stop-color="#c0dbff"/><stop offset="0.1875" stop-color="#c9dbff"/><stop offset="0.25" stop-color="#d3daff"/><stop offset="0.3125" stop-color="#dedaff"/><stop offset="0.375" stop-color="#e8daff"/><stop offset="0.4375" stop-color="#f2d9ff"/><stop offset="0.5" stop-color="#fdd9ff"/><stop offset="0.5625" stop-color="#ffd1f6"/><stop offset="0.625" stop-color="#ffc9ec"/><stop offset="0.6875" stop-color="#ffc0e3"/><stop offset="0.75" stop-color="#ffb9da"/><stop offset="0.8125" stop-color="#ffb1d2"/><stop offset="0.875" stop-color="#ffaaca"/><stop offset="0.9375" stop-color="#ffa4c3"/><stop offset="1" stop-color="#ff9ebc"/></linearGradient>
<linearGradient id="c50" gradientUnits="userSpaceOnUse" x1="382.5" x2="627.8" y1="0" y2="0"><stop offset="0" stop-color="#addaff"/><stop offset="0.0625" stop-color="#b6daff"/><stop offset="0.125" stop-color="#c0d9ff"/><stop offset="0.1875" stop-color="#cad9ff"/><stop offset="0.25" stop-color="#d3d9ff"/><stop offset="0.3125" stop-color="#ded8ff"/><stop offset="0.375" stop-color="#e8d8ff"/><stop offset="0.4375" stop-color="#f2d8ff"/><stop offset="0.5" stop-color="#fdd7ff"/><stop offset="0.5625" stop-color="#ffd0f7"/><stop offset="0.625" stop-color="#ffc7ed"/><stop offset="0.6875" stop-color="#ffbfe3"/><stop offset="0.75" stop-color="#ffb7db"/><stop offset="0.8125" stop-color="#ffb0d2"/><stop offset="0.875" stop-color="#ffa9cb"/><stop offset="0.9375" stop-color="#ffa3c3"/><stop offset="1" stop-color="#ff9cbc"/></linearGradient>
<linearGradient id="c51" gradientUnits="userSpaceOnUse" x1="382.5" x2="627.8" y1="0" y2="0"><stop offset="0" stop-color="#add8ff"/><stop offset="0.0625" stop-color="#b6d8ff"/><stop offset="0.125" stop-color="#c0d8ff"/><stop offset="0.1875" stop-color="#cad7ff"/><stop offset="0.25" stop-color="#d3d7ff"/><stop offset="0.3125" stop-color="#ded7ff"/><stop offset="0.375" stop-color="#e8d6ff"/><stop offset="0.4375" stop-color="#f2d6ff"/><stop offset="0.5" stop-color="#fdd5ff"/><stop offset="0.5625" stop-color="#ffcef7"/><stop offset="0.625" stop-color="#ffc5ed"/><stop offset="0.6875" stop-color="#ffbde4"/><stop offset="0.75" stop-color="#ffb6db"/><stop offset="0.8125" stop-color="#ffafd3"/><stop offset="0.875" stop-color="#ffa8cb"/><stop offset="0.9375" stop-color="#ffa1c3"/><stop offset="1" stop-color="#ff9bbc"/></linearGradient>
<linearGradient id="c52" gradientUnits="userSpaceOnUse" x1="382.5" x2="627.8" y1="0" y2="0"><stop offset="0" stop-color="#add7ff"/><stop offset="0.0625" stop-color="#b6d6ff"/><stop offset="0.125" stop-color="#c0d6ff"/><stop offset="0.1875" stop-color="#cad6ff"/><stop offset="0.25" stop-color="#d3d5ff"/><stop offset="0.3125" stop-color="#ddd5ff"/><stop offset="0.375" stop-color="#e8d4ff"/><stop offset="0.4375" stop-color="#f2d4ff"/><stop offset="0.5" stop-color="#fdd4ff"/><stop offset="0.5625" stop-color="#ffccf7"/><stop offset="0.625" stop-color="#ffc4ed"/><stop offset="0.6875" stop-color="#ffbce4"/><stop offset="0.75" stop-color="#ffb4db"/><stop offset="0.8125" stop-color="#ffadd3"/><stop offset="0.875" stop-color="#ffa6cb"/><stop offset="0.9375" stop-color="#ffa0c4"/><stop offset="1" stop-color="#ff9abd"/></linearGradient>
<linearGradient id="c53" gradientUnits="userSpaceOnUse" x1="382.5" x2="627.8" y1="0" y2="0"><stop offset="0" stop-color="#add5ff"/><stop offset="0.0625" stop-color="#b6d5ff"/><stop offset="0.125" stop-color="#c0d4ff"/><stop offset="0.1875" stop-color="#cad4ff"/><stop offset="0.25" stop-color="#d3d4ff"/><stop offset="0.3125" stop-color="#ddd3ff"/><stop offset="0.375" stop-color="#e8d3ff"/><stop offset="0.4375" stop-color="#f2d2ff"/><stop offset="0.5" stop-color="#fdd2ff"/><stop offset="0.5625" stop-color="#ffcbf7"/><stop offset="0.625" stop-color="#ffc2ed"/><stop offset="0.6875" stop-color="#ffbae4"/><stop offset="0.75" stop-color="#ffb3db"/><stop offset="0.8125" stop-color="#ffacd3"/><stop offset="0.875" stop-color="#ffa5cb"/><stop offset="0.9375" stop-color="#ff9fc4"/><stop offset="1" stop-color="#ff99bd"/></linearGradient>
<linearGradient id="c54" gradientUnits="userSpaceOnUse" x1="382.5" x2="627.8" y1="0" y2="0"><stop offset="0" stop-color="#add3ff"/><stop offset="0.0625" stop-color="#b6d3ff"/><stop offset="0.125" stop-color="#c0d3ff"/><stop offset="0.1875" stop-color="#cad2ff"/><stop offset="0.25" stop-color="#d3d2ff"/><stop offset="0.3125" stop-color="#ddd1ff"/><stop offset="0.375" stop-color="#e8d1ff"/><stop offset="0.4375" stop-color="#f2d1ff"/><stop offset="0.5" stop-color="#fcd0ff"/><stop offset="0.5625" stop-color="#ffc9f7"/><stop offset="0.625" stop-color="#ffc1ed"/><stop offset="0.6875" stop-color="#ffb9e4"/><stop offset="0.75" stop-color="#ffb2db"/><stop offset="0.8125" stop-color="#ffabd3"/><stop offset="0.875" stop-color="#ffa4cb"/><stop offset="0.9375" stop-color="#ff9ec4"/><stop offset="1" stop-color="#ff98bd"/></linearGradient>
<linearGradient id="c55" gradientUnits="userSpaceOnUse" x1="382.5" x2="627.8" y1="0" y2="0"><stop offset="0" stop-color="#add2ff"/><stop offset="0.0625" stop-color="#b7d1ff"/><stop offset="0.125" stop-color="#c0d1ff"/><stop offset="0.1875" stop-color="#cad1ff"/><stop offset="0.25" stop-color="#d3d0ff"/><stop offset="0.3125" stop-color="#ddd0ff"/><stop offset="0.375" stop-color="#e8cfff"/><stop offset="0.4375" stop-color="#f2cfff"/><stop offset="0.5" stop-color="#fcceff"/><stop offset="0.5625" stop-color="#ffc8f7"/><stop offset="0.625" stop-color="#ffbfed"/><stop offset="0.6875" stop-color="#ffb8e4"/><stop offset="0.75" stop-color="#ffb0dc"/><stop offset="0.8125" stop-color="#ffa9d3"/><stop offset="0.875" stop-color="#ffa3cc"/><stop offset="0.9375" stop-color="#ff9cc4"/><stop offset="1" stop-color="#ff96bd"/></linearGradient>
<linearGradient id="c56" gradientUnits="userSpaceOnUse" x1="382.5" x2="627.8" y1="0" y2="0"><stop offset="0" stop-color="#add0ff"/><stop offset="0.0625" stop-color="#b7d0ff"/><stop offset="0.125" stop-color="#c0cfff"/><stop offset="0.1875" stop-color="#cacfff"/><stop offset="0.25" stop-color="#d3ceff"/><stop offset="0.3125" stop-color="#ddceff"/><stop offset="0.375" stop-color="#e7ceff"/><stop offset="0.4375" stop-color="#f2cdff"/><stop offset="0.5" stop-color="#fccdff"/><stop offset="0.5625" stop-color="#ffc6f7"/><stop offset="0.625" stop-color="#ffbeee"/><stop offset="0.6875" stop-color="#ffb6e4"/><stop offset="0.75" stop-color="#ffafdc"/><stop offset="0.8125" stop-color="#ffa8d4"/><stop offset="0.875" stop-color="#ffa1cc"/><stop offset="0.9375" stop-color="#ff9bc5"/><stop offset="1" stop-color="#ff95be"/></linearGradient>
<linearGradient id="c57" gradientUnits="userSpaceOnUse" x1="382.5" x2="627.8" y1="0" y2="0"><stop offset="0" stop-color="#adcfff"/><stop offset="0.0625" stop-color="#b7ceff"/><stop offset="0.125" stop-color="#c0ceff"/><stop offset="0.1875" stop-color="#cacdff"/><stop offset="0.25" stop-color="#d3cdff"/><stop offset="0.3125" stop-color="#ddccff"/><stop offset="0.375" stop-color="#e7ccff"/><stop offset="0.4375" stop-color="#f2cbff"/><stop offset="0.5" stop-color="#fccbff"/><stop offset="0.5625" stop-color="#ffc5f8"/><stop offset="0.625" stop-color="#ffbcee"/><stop offset="0.6875" stop-color="#ffb5e5"/><stop offset="0.75" stop-color="#ffaddc"/><stop offset="0.8125" stop-color="#ffa7d4"/><stop offset="0.875" stop-color="#ffa0cc"/><stop offset="0.9375" stop-color="#ff9ac5"/><stop offset="1" stop-color="#ff94be"/></linearGradient>
<linearGradient id="c58" gradientUnits="userSpaceOnUse" x1="382.5" x2="627.8" y1="0" y2="0"><stop offset="0" stop-color="#aecdff"/><stop offset="0.0625" stop-color="#b7ccff"/><stop offset="0.125" stop-color="#c0ccff"/><stop offset="0.1875" stop-color="#caccff"/><stop offset="0.25" stop-color="#d3cbff"/><stop offset="0.3125" stop-color="#ddcbff"/><stop offset="0.375" stop-color="#e7caff"/><stop offset="0.4375" stop-color="#f2caff"/><stop offset="0.5" stop-color="#fcc9ff"/><stop offset="0.5625" stop-color="#ffc3f8"/><stop offset="0.625" stop-color="#ffbbee"/><stop offset="0.6875" stop-color="#ffb3e5"/><stop offset="0.75" stop-color="#ffacdc"/><stop offset="0.8125" stop-color="#ffa5d4"/><stop offset="0.875" stop-color="#ff9fcc"/><stop offset="0.9375" stop-color="#ff99c5"/><stop offset="1" stop-color="#ff93be"/></linearGradient>
<linearGradient id="c59" gradientUnits="userSpaceOnUse" x1="382.5" x2="627.8" y1="0" y2="0"><stop offset="0" stop-color="#aeccff"/><stop offset="0.0625" stop-color="#b7cbff"/><stop offset="0.125" stop-color="#c0cbff"/><stop offset="0.1875" stop-color="#cacaff"/><stop offset="0.25" stop-color="#d3caff"/><stop offset="0.3125" stop-color="#ddcaff"/><stop offset="0.375" stop-color="#e7c9ff"/><stop offset="0.4375" stop-color="#f1c9ff"/><stop offset="0.5" stop-color="#fcc8ff"/><stop offset="0.5625" stop-color="#ffc2f8"/><stop offset="0.625" stop-color="#ffbaee"/><stop offset="0.6875" stop-color="#ffb2e5"/><stop offset="0.75" stop-color="#ffabdc"/><stop offset="0.8125" stop-color="#ffa4d4"/><stop offset="0.875" stop-color="#ff9ecc"/><stop offset="0.9375" stop-color="#ff98c5"/><stop offset="1" stop-color="#ff92be"/></linearGradient>
<linearGradient id="th" x1="0" x2="0" y1="0" y2="1"><stop offset="0" stop-color="#363636"/><stop offset=".5" stop-color="#2d2d2d"/><stop offset=".5" stop-color="#1c1c1c"/><stop offset="1" stop-color="#050505"/></linearGradient>
</defs>
<rect width="1665" height="883" fill="#323232"/>
<rect width="1665" height="1.1" fill="#222"/>
<text transform="translate(24.80,70.00) scale(0.9528,1)" fill="#f2f2f2" style="font-size:40px;" stroke="#f2f2f2" stroke-width="0.3">Grayscale</text>
<text transform="translate(130.00,113.00) scale(1.1180,1)" fill="#f2f2f2" style="font-size:27px;" stroke="#f2f2f2" stroke-width="0.3">dE Average: 6,08</text>
<text transform="translate(640.45,57.40) scale(1.0925,1)" fill="#f2f2f2" style="font-size:28.3px;" stroke="#f2f2f2" stroke-width="0.3">Total Gamma: 2,45</text>
<text transform="translate(1275.00,57.40) scale(1.0394,1)" fill="#f2f2f2" style="font-size:28.3px;" stroke="#f2f2f2" stroke-width="0.3">CCT Avg: 6789</text>
<rect x="46.1" y="155.6" width="410.5" height="285.70000000000005" fill="#232323"/>
<path d="M100.6 155.6V441.3 M155.1 155.6V441.3 M210.2 155.6V441.3 M264.5 155.6V441.3 M374.5 155.6V441.3 M429.5 155.6V441.3" stroke="#8e8e8e" stroke-width="1.2" fill="none"/>
<path d="M319.3 155.6V441.3" stroke="#b52a36" stroke-width="2" fill="none"/>
<path d="M46.1 155.6H456.6V441.3" stroke="#8a8a8a" stroke-width="1.2" fill="none"/>
<path d="M46.1 155.6V441.3H456.6" stroke="#a8a8a8" stroke-width="1.4" fill="none"/>
<rect x="46.6" y="158.50" width="216.90" height="19.90" fill="#000"/>
<rect x="46.9" y="159.50" width="215.20" height="17.50" fill="url(#b0)"/>
<rect x="46.6" y="183.80" width="211.30" height="19.30" fill="#000"/>
<rect x="46.9" y="184.80" width="209.60" height="16.90" fill="url(#b1)"/>
<rect x="46.6" y="210.30" width="207.00" height="19.20" fill="#000"/>
<rect x="46.9" y="211.30" width="205.30" height="16.80" fill="url(#b2)"/>
<rect x="46.6" y="235.50" width="198.90" height="19.65" fill="#000"/>
<rect x="46.9" y="236.50" width="197.20" height="17.25" fill="url(#b3)"/>
<rect x="46.6" y="262.20" width="189.30" height="19.40" fill="#000"/>
<rect x="46.9" y="263.20" width="187.60" height="17.00" fill="url(#b4)"/>
<rect x="46.6" y="287.30" width="175.00" height="20.10" fill="#000"/>
<rect x="46.9" y="288.30" width="173.30" height="17.70" fill="url(#b5)"/>
<rect x="46.6" y="313.50" width="157.30" height="20.20" fill="#000"/>
<rect x="46.9" y="314.50" width="155.60" height="17.80" fill="url(#b6)"/>
<rect x="46.6" y="338.90" width="131.10" height="20.00" fill="#000"/>
<rect x="46.9" y="339.90" width="129.40" height="17.60" fill="url(#b7)"/>
<rect x="46.6" y="365.30" width="103.20" height="20.20" fill="#000"/>
<rect x="46.9" y="366.30" width="101.50" height="17.80" fill="url(#b8)"/>
<rect x="46.6" y="392.20" width="63.60" height="20.50" fill="#000"/>
<rect x="46.9" y="393.20" width="61.90" height="18.10" fill="url(#b9)"/>
<rect x="46.6" y="416.60" width="15.60" height="21.00" fill="#000"/>
<rect x="46.9" y="417.60" width="13.90" height="18.60" fill="url(#b10)"/>
<path d="M72.8 155.6V441.3" stroke="#0e8a0e" stroke-width="1.6" fill="none"/>
<path d="M127.4 155.6V441.3" stroke="#f4f41a" stroke-width="1.6" fill="none"/>
<path d="M40.1 155.60H46.1 M40.1 181.57H46.1 M40.1 207.55H46.1 M40.1 233.52H46.1 M40.1 259.49H46.1 M40.1 285.46H46.1 M40.1 311.44H46.1 M40.1 337.41H46.1 M40.1 363.38H46.1 M40.1 389.35H46.1 M40.1 415.33H46.1 M40.1 441.30H46.1" stroke="#dcdcdc" stroke-width="1.4" fill="none"/>
<text transform="translate(19.53,174.19) scale(0.9650,1)" fill="#d6d6d6" style="font-size:15.5px;" stroke="#d6d6d6" stroke-width="0.2">100</text>
<text transform="translate(27.85,200.16) scale(0.9650,1)" fill="#d6d6d6" style="font-size:15.5px;" stroke="#d6d6d6" stroke-width="0.2">90</text>
<text transform="translate(27.85,226.13) scale(0.9650,1)" fill="#d6d6d6" style="font-size:15.5px;" stroke="#d6d6d6" stroke-width="0.2">80</text>
<text transform="translate(27.85,252.10) scale(0.9650,1)" fill="#d6d6d6" style="font-size:15.5px;" stroke="#d6d6d6" stroke-width="0.2">70</text>
<text transform="translate(27.85,278.08) scale(0.9650,1)" fill="#d6d6d6" style="font-size:15.5px;" stroke="#d6d6d6" stroke-width="0.2">60</text>
<text transform="translate(27.85,304.05) scale(0.9650,1)" fill="#d6d6d6" style="font-size:15.5px;" stroke="#d6d6d6" stroke-width="0.2">50</text>
<text transform="translate(27.85,330.02) scale(0.9650,1)" fill="#d6d6d6" style="font-size:15.5px;" stroke="#d6d6d6" stroke-width="0.2">40</text>
<text transform="translate(27.85,356.00) scale(0.9650,1)" fill="#d6d6d6" style="font-size:15.5px;" stroke="#d6d6d6" stroke-width="0.2">30</text>
<text transform="translate(27.85,381.97) scale(0.9650,1)" fill="#d6d6d6" style="font-size:15.5px;" stroke="#d6d6d6" stroke-width="0.2">20</text>
<text transform="translate(27.85,407.94) scale(0.9650,1)" fill="#d6d6d6" style="font-size:15.5px;" stroke="#d6d6d6" stroke-width="0.2">10</text>
<text transform="translate(36.18,433.91) scale(0.9650,1)" fill="#d6d6d6" style="font-size:15.5px;" stroke="#d6d6d6" stroke-width="0.2">0</text>
<path d="M46.10 441.3v5.5 M100.60 441.3v5.5 M155.10 441.3v5.5 M210.20 441.3v5.5 M264.50 441.3v5.5 M319.30 441.3v5.5 M374.50 441.3v5.5 M429.50 441.3v5.5" stroke="#dcdcdc" stroke-width="1.4" fill="none"/>
<text transform="translate(41.94,462.70) scale(0.9650,1)" fill="#d6d6d6" style="font-size:15.5px;" stroke="#d6d6d6" stroke-width="0.2">0</text>
<text transform="translate(96.44,462.70) scale(0.9650,1)" fill="#d6d6d6" style="font-size:15.5px;" stroke="#d6d6d6" stroke-width="0.2">2</text>
<text transform="translate(150.94,462.70) scale(0.9650,1)" fill="#d6d6d6" style="font-size:15.5px;" stroke="#d6d6d6" stroke-width="0.2">4</text>
<text transform="translate(206.04,462.70) scale(0.9650,1)" fill="#d6d6d6" style="font-size:15.5px;" stroke="#d6d6d6" stroke-width="0.2">6</text>
<text transform="translate(260.34,462.70) scale(0.9650,1)" fill="#d6d6d6" style="font-size:15.5px;" stroke="#d6d6d6" stroke-width="0.2">8</text>
<text transform="translate(310.98,462.70) scale(0.9650,1)" fill="#d6d6d6" style="font-size:15.5px;" stroke="#d6d6d6" stroke-width="0.2">10</text>
<text transform="translate(366.18,462.70) scale(0.9650,1)" fill="#d6d6d6" style="font-size:15.5px;" stroke="#d6d6d6" stroke-width="0.2">12</text>
<text transform="translate(421.18,462.70) scale(0.9650,1)" fill="#d6d6d6" style="font-size:15.5px;" stroke="#d6d6d6" stroke-width="0.2">14</text>
<text transform="translate(197.85,149.10) scale(1.0399,1)" fill="#d8d8d8" style="font-size:14.3px;">DeltaE 2000</text>
<rect x="510.8" y="99.6" width="534.6000000000001" height="341.70000000000005" fill="#232323"/>
<path d="M510.8 134.4H1045.4 M510.8 202.9H1045.4 M510.8 271.9H1045.4 M510.8 339.0H1045.4 M510.8 408.2H1045.4" stroke="#8e8e8e" stroke-width="1.3" fill="none"/>
<path d="M510.8 99.6H1045.4V441.3" stroke="#8a8a8a" stroke-width="1.2" fill="none"/>
<path d="M510.8 99.6V441.3H1045.4" stroke="#a8a8a8" stroke-width="1.4" fill="none"/>
<polyline points="510.9,267.7 564.3,299.7 617.6,300.8 671.0,302.2 724.4,304.7 777.8,304.2 831.1,309.4 884.5,309.7 937.9,308.6 991.2,313.5 1044.6,318.5" stroke="#ee1414" stroke-width="3.2" fill="none" stroke-linejoin="round"/>
<polyline points="510.9,263.5 564.3,286.2 617.6,278.6 671.0,272.8 724.4,269.9 777.8,263.2 831.1,263.8 884.5,260.6 937.9,256.4 991.2,258.1 1044.6,256.4" stroke="#0f870f" stroke-width="3.2" fill="none" stroke-linejoin="round"/>
<polyline points="510.9,261.3 564.3,290.7 617.6,290.1 671.0,289.2 724.4,288.7 777.8,285.4 831.1,287.0 884.5,284.9 937.9,280.3 991.2,280.0 1044.6,271.1" stroke="#0a0aee" stroke-width="3.2" fill="none" stroke-linejoin="round"/>
<path d="M505.3 134.4H510.8 M505.3 202.9H510.8 M505.3 271.9H510.8 M505.3 339.0H510.8 M505.3 408.2H510.8" stroke="#dcdcdc" stroke-width="1.4" fill="none"/>
<text transform="translate(487.85,139.80) scale(0.9650,1)" fill="#d6d6d6" style="font-size:15.5px;" stroke="#d6d6d6" stroke-width="0.2">40</text>
<text transform="translate(487.85,208.30) scale(0.9650,1)" fill="#d6d6d6" style="font-size:15.5px;" stroke="#d6d6d6" stroke-width="0.2">20</text>
<text transform="translate(496.18,277.30) scale(0.9650,1)" fill="#d6d6d6" style="font-size:15.5px;" stroke="#d6d6d6" stroke-width="0.2">0</text>
<text transform="translate(482.91,344.40) scale(0.9650,1)" fill="#d6d6d6" style="font-size:15.5px;" stroke="#d6d6d6" stroke-width="0.2">-20</text>
<text transform="translate(482.91,413.60) scale(0.9650,1)" fill="#d6d6d6" style="font-size:15.5px;" stroke="#d6d6d6" stroke-width="0.2">-40</text>
<path d="M510.90 441.3v5.5 M564.27 441.3v5.5 M617.64 441.3v5.5 M671.01 441.3v5.5 M724.38 441.3v5.5 M777.75 441.3v5.5 M831.12 441.3v5.5 M884.49 441.3v5.5 M937.86 441.3v5.5 M991.23 441.3v5.5 M1044.60 441.3v5.5" stroke="#dcdcdc" stroke-width="1.4" fill="none"/>
<text transform="translate(506.74,462.70) scale(0.9650,1)" fill="#d6d6d6" style="font-size:15.5px;" stroke="#d6d6d6" stroke-width="0.2">0</text>
<text transform="translate(555.95,462.70) scale(0.9650,1)" fill="#d6d6d6" style="font-size:15.5px;" stroke="#d6d6d6" stroke-width="0.2">10</text>
<text transform="translate(609.32,462.70) scale(0.9650,1)" fill="#d6d6d6" style="font-size:15.5px;" stroke="#d6d6d6" stroke-width="0.2">20</text>
<text transform="translate(662.69,462.70) scale(0.9650,1)" fill="#d6d6d6" style="font-size:15.5px;" stroke="#d6d6d6" stroke-width="0.2">30</text>
<text transform="translate(716.06,462.70) scale(0.9650,1)" fill="#d6d6d6" style="font-size:15.5px;" stroke="#d6d6d6" stroke-width="0.2">40</text>
<text transform="translate(769.43,462.70) scale(0.9650,1)" fill="#d6d6d6" style="font-size:15.5px;" stroke="#d6d6d6" stroke-width="0.2">50</text>
<text transform="translate(822.80,462.70) scale(0.9650,1)" fill="#d6d6d6" style="font-size:15.5px;" stroke="#d6d6d6" stroke-width="0.2">60</text>
<text transform="translate(876.17,462.70) scale(0.9650,1)" fill="#d6d6d6" style="font-size:15.5px;" stroke="#d6d6d6" stroke-width="0.2">70</text>
<text transform="translate(929.54,462.70) scale(0.9650,1)" fill="#d6d6d6" style="font-size:15.5px;" stroke="#d6d6d6" stroke-width="0.2">80</text>
<text transform="translate(982.91,462.70) scale(0.9650,1)" fill="#d6d6d6" style="font-size:15.5px;" stroke="#d6d6d6" stroke-width="0.2">90</text>
<text transform="translate(1032.12,462.70) scale(0.9650,1)" fill="#d6d6d6" style="font-size:15.5px;" stroke="#d6d6d6" stroke-width="0.2">100</text>
<text transform="translate(722.00,93.60) scale(0.9841,1)" fill="#d8d8d8" style="font-size:14.3px;">RGB Balance</text>
<rect x="1112.9" y="99.6" width="535.6999999999998" height="341.70000000000005" fill="#232323"/>
<path d="M1112.9 437.0H1648.6 M1112.9 394.3H1648.6 M1112.9 351.6H1648.6 M1112.9 308.9H1648.6 M1112.9 266.2H1648.6 M1112.9 223.5H1648.6 M1112.9 180.8H1648.6 M1112.9 138.1H1648.6" stroke="#8e8e8e" stroke-width="1.3" fill="none"/>
<path d="M1112.9 99.6H1648.6V441.3" stroke="#8a8a8a" stroke-width="1.2" fill="none"/>
<path d="M1112.9 99.6V441.3H1648.6" stroke="#a8a8a8" stroke-width="1.4" fill="none"/>
<polyline points="1112.8,377.0 1166.4,198.1 1220.0,181.5 1273.6,174.2 1327.2,169.5 1380.8,170.5 1434.3,162.4 1487.9,163.0 1541.5,170.8 1595.1,158.5 1648.7,163.1" stroke="#8e8e8e" stroke-width="2.8" fill="none" stroke-linejoin="round"/>
<polyline points="1111.5,375.5 1117.1,312.2 1121.7,298.1 1127.2,283.2 1134.0,265.5 1140.8,252.7 1150.3,238.3 1161.1,226.1 1166.6,220.8 1173.4,216.2 1188.3,208.0 1208.7,200.0 1221.0,196.0 1229.1,194.0 1249.5,189.6 1273.3,185.2 1300.0,181.4 1325.4,178.4 1377.5,174.0 1429.6,170.6 1481.7,168.0 1533.8,166.0 1585.8,164.5 1648.3,163.2" stroke="#f8f820" stroke-width="3.0" fill="none" stroke-linejoin="round"/>
<path d="M1107.4 437.0H1112.9 M1107.4 394.3H1112.9 M1107.4 351.6H1112.9 M1107.4 308.9H1112.9 M1107.4 266.2H1112.9 M1107.4 223.5H1112.9 M1107.4 180.8H1112.9 M1107.4 138.1H1112.9" stroke="#dcdcdc" stroke-width="1.4" fill="none"/>
<text transform="translate(1098.18,442.60) scale(0.9650,1)" fill="#d6d6d6" style="font-size:15.5px;" stroke="#d6d6d6" stroke-width="0.2">1</text>
<text transform="translate(1085.75,399.90) scale(0.9650,1)" fill="#d6d6d6" style="font-size:15.5px;" stroke="#d6d6d6" stroke-width="0.2">1,2</text>
<text transform="translate(1085.75,357.20) scale(0.9650,1)" fill="#d6d6d6" style="font-size:15.5px;" stroke="#d6d6d6" stroke-width="0.2">1,4</text>
<text transform="translate(1085.75,314.50) scale(0.9650,1)" fill="#d6d6d6" style="font-size:15.5px;" stroke="#d6d6d6" stroke-width="0.2">1,6</text>
<text transform="translate(1085.75,271.80) scale(0.9650,1)" fill="#d6d6d6" style="font-size:15.5px;" stroke="#d6d6d6" stroke-width="0.2">1,8</text>
<text transform="translate(1098.18,229.10) scale(0.9650,1)" fill="#d6d6d6" style="font-size:15.5px;" stroke="#d6d6d6" stroke-width="0.2">2</text>
<text transform="translate(1085.75,186.40) scale(0.9650,1)" fill="#d6d6d6" style="font-size:15.5px;" stroke="#d6d6d6" stroke-width="0.2">2,2</text>
<text transform="translate(1085.75,143.70) scale(0.9650,1)" fill="#d6d6d6" style="font-size:15.5px;" stroke="#d6d6d6" stroke-width="0.2">2,4</text>
<path d="M1112.80 441.3v5.5 M1166.39 441.3v5.5 M1219.98 441.3v5.5 M1273.57 441.3v5.5 M1327.16 441.3v5.5 M1380.75 441.3v5.5 M1434.34 441.3v5.5 M1487.93 441.3v5.5 M1541.52 441.3v5.5 M1595.11 441.3v5.5 M1648.70 441.3v5.5" stroke="#dcdcdc" stroke-width="1.4" fill="none"/>
<text transform="translate(1108.64,462.70) scale(0.9650,1)" fill="#d6d6d6" style="font-size:15.5px;" stroke="#d6d6d6" stroke-width="0.2">0</text>
<text transform="translate(1158.07,462.70) scale(0.9650,1)" fill="#d6d6d6" style="font-size:15.5px;" stroke="#d6d6d6" stroke-width="0.2">10</text>
<text transform="translate(1211.66,462.70) scale(0.9650,1)" fill="#d6d6d6" style="font-size:15.5px;" stroke="#d6d6d6" stroke-width="0.2">20</text>
<text transform="translate(1265.25,462.70) scale(0.9650,1)" fill="#d6d6d6" style="font-size:15.5px;" stroke="#d6d6d6" stroke-width="0.2">30</text>
<text transform="translate(1318.84,462.70) scale(0.9650,1)" fill="#d6d6d6" style="font-size:15.5px;" stroke="#d6d6d6" stroke-width="0.2">40</text>
<text transform="translate(1372.43,462.70) scale(0.9650,1)" fill="#d6d6d6" style="font-size:15.5px;" stroke="#d6d6d6" stroke-width="0.2">50</text>
<text transform="translate(1426.02,462.70) scale(0.9650,1)" fill="#d6d6d6" style="font-size:15.5px;" stroke="#d6d6d6" stroke-width="0.2">60</text>
<text transform="translate(1479.61,462.70) scale(0.9650,1)" fill="#d6d6d6" style="font-size:15.5px;" stroke="#d6d6d6" stroke-width="0.2">70</text>
<text transform="translate(1533.20,462.70) scale(0.9650,1)" fill="#d6d6d6" style="font-size:15.5px;" stroke="#d6d6d6" stroke-width="0.2">80</text>
<text transform="translate(1586.79,462.70) scale(0.9650,1)" fill="#d6d6d6" style="font-size:15.5px;" stroke="#d6d6d6" stroke-width="0.2">90</text>
<text transform="translate(1636.22,462.70) scale(0.9650,1)" fill="#d6d6d6" style="font-size:15.5px;" stroke="#d6d6d6" stroke-width="0.2">100</text>
<text transform="translate(1311.50,93.60) scale(1.0554,1)" fill="#d8d8d8" style="font-size:14.3px;">Gamma Log/Log</text>
<rect x="0" y="494.3" width="1665" height="140.5" fill="#000"/>
<rect x="252" y="515.5" width="1318.5" height="112" fill="#030303" stroke="#090909" stroke-width="1"/>
<rect x="274.60" y="520.5" width="100.5" height="37.1" fill="#030305" stroke="#fff" stroke-width="1.2"/>
<rect x="274.60" y="568.5" width="100.5" height="35.9" fill="#000000" stroke="#fff" stroke-width="1.2"/>
<text x="321.99" y="618.80" fill="#fff" style="font-size:12px;" stroke="#fff" stroke-width=".35">0</text>
<rect x="393.11" y="520.5" width="100.5" height="37.1" fill="#171919" stroke="#fff" stroke-width="1.2"/>
<rect x="393.11" y="568.5" width="100.5" height="35.9" fill="#1c1c1c" stroke="#fff" stroke-width="1.2"/>
<text x="437.12" y="618.80" fill="#fff" style="font-size:12px;" stroke="#fff" stroke-width=".35">10</text>
<rect x="511.62" y="520.5" width="100.5" height="37.1" fill="#2d3231" stroke="#fff" stroke-width="1.2"/>
<rect x="511.62" y="568.5" width="100.5" height="35.9" fill="#333333" stroke="#fff" stroke-width="1.2"/>
<text x="555.63" y="618.80" fill="#fff" style="font-size:12px;" stroke="#fff" stroke-width=".35">20</text>
<rect x="630.13" y="520.5" width="100.5" height="37.1" fill="#474d4b" stroke="#fff" stroke-width="1.2"/>
<rect x="630.13" y="568.5" width="100.5" height="35.9" fill="#4d4d4d" stroke="#fff" stroke-width="1.2"/>
<text x="674.14" y="618.80" fill="#fff" style="font-size:12px;" stroke="#fff" stroke-width=".35">30</text>
<rect x="748.64" y="520.5" width="100.5" height="37.1" fill="#5f6663" stroke="#fff" stroke-width="1.2"/>
<rect x="748.64" y="568.5" width="100.5" height="35.9" fill="#676767" stroke="#fff" stroke-width="1.2"/>
<text x="792.65" y="618.80" fill="#fff" style="font-size:12px;" stroke="#fff" stroke-width=".35">40</text>
<rect x="867.15" y="520.5" width="100.5" height="37.1" fill="#79827e" stroke="#fff" stroke-width="1.2"/>
<rect x="867.15" y="568.5" width="100.5" height="35.9" fill="#808080" stroke="#fff" stroke-width="1.2"/>
<text x="911.16" y="618.80" fill="#fff" style="font-size:12px;" stroke="#fff" stroke-width=".35">50</text>
<rect x="985.66" y="520.5" width="100.5" height="37.1" fill="#8f9994" stroke="#fff" stroke-width="1.2"/>
<rect x="985.66" y="568.5" width="100.5" height="35.9" fill="#9a9a9a" stroke="#fff" stroke-width="1.2"/>
<rect x="986.86" y="521.7" width="98.1" height="34.7"fill="none" stroke="#b4b4b4" stroke-opacity=".55" stroke-width="1"/>
<rect x="986.86" y="569.7" width="98.1" height="33.5"fill="none" stroke="#b4b4b4" stroke-opacity=".55" stroke-width="1"/>
<text x="1029.67" y="618.80" fill="#fff" style="font-size:12px;" stroke="#fff" stroke-width=".35">60</text>
<rect x="1104.17" y="520.5" width="100.5" height="37.1" fill="#a5b2ab" stroke="#fff" stroke-width="1.2"/>
<rect x="1104.17" y="568.5" width="100.5" height="35.9" fill="#b3b3b3" stroke="#fff" stroke-width="1.2"/>
<rect x="1105.37" y="521.7" width="98.1" height="34.7"fill="none" stroke="#b4b4b4" stroke-opacity=".55" stroke-width="1"/>
<rect x="1105.37" y="569.7" width="98.1" height="33.5"fill="none" stroke="#b4b4b4" stroke-opacity=".55" stroke-width="1"/>
<text x="1148.18" y="618.80" fill="#fff" style="font-size:12px;" stroke="#fff" stroke-width=".35">70</text>
<rect x="1222.68" y="520.5" width="100.5" height="37.1" fill="#c2cfc9" stroke="#fff" stroke-width="1.2"/>
<rect x="1222.68" y="568.5" width="100.5" height="35.9" fill="#cccccc" stroke="#fff" stroke-width="1.2"/>
<rect x="1223.88" y="521.7" width="98.1" height="34.7"fill="none" stroke="#b4b4b4" stroke-opacity=".55" stroke-width="1"/>
<rect x="1223.88" y="569.7" width="98.1" height="33.5"fill="none" stroke="#b4b4b4" stroke-opacity=".55" stroke-width="1"/>
<text x="1266.69" y="618.80" fill="#fff" style="font-size:12px;" stroke="#fff" stroke-width=".35">80</text>
<rect x="1341.19" y="520.5" width="100.5" height="37.1" fill="#d8e5e0" stroke="#fff" stroke-width="1.2"/>
<rect x="1341.19" y="568.5" width="100.5" height="35.9" fill="#e6e6e6" stroke="#fff" stroke-width="1.2"/>
<rect x="1342.39" y="521.7" width="98.1" height="34.7"fill="none" stroke="#b4b4b4" stroke-opacity=".55" stroke-width="1"/>
<rect x="1342.39" y="569.7" width="98.1" height="33.5"fill="none" stroke="#b4b4b4" stroke-opacity=".55" stroke-width="1"/>
<text x="1385.20" y="618.80" fill="#fff" style="font-size:12px;" stroke="#fff" stroke-width=".35">90</text>
<rect x="1459.70" y="520.5" width="100.5" height="37.1" fill="#effffb" stroke="#fff" stroke-width="1.2"/>
<rect x="1459.70" y="568.5" width="100.5" height="35.9" fill="#fcfcfc" stroke="#fff" stroke-width="1.2"/>
<rect x="1460.90" y="521.7" width="98.1" height="34.7"fill="none" stroke="#b4b4b4" stroke-opacity=".55" stroke-width="1"/>
<rect x="1460.90" y="569.7" width="98.1" height="33.5"fill="none" stroke="#b4b4b4" stroke-opacity=".55" stroke-width="1"/>
<text x="1500.40" y="618.80" fill="#fff" style="font-size:12px;" stroke="#fff" stroke-width=".35">100</text>
<g transform="translate(266.4,557.2) rotate(-90)">
<text transform="translate(0.00,0.00) scale(0.9855,1)" fill="#fff" style="font-size:13px;" stroke="#fff" stroke-width=".3">Actual</text>
</g>
<g transform="translate(266.4,604.6) rotate(-90)">
<text transform="translate(0.00,0.00) scale(0.9855,1)" fill="#fff" style="font-size:13px;" stroke="#fff" stroke-width=".3">Target</text>
</g>
<text transform="translate(15.20,673.80) scale(1.0543,1)" fill="#f2f2f2" style="font-size:29px;" stroke="#f2f2f2" stroke-width="0.3">Current Reading</text>
<text transform="translate(14.90,717.20) scale(1.0362,1)" fill="#f2f2f2" style="font-size:24.5px;" stroke="#f2f2f2" stroke-width="0.3">x: 0,3043</text>
<text transform="translate(14.90,759.30) scale(1.0353,1)" fill="#f2f2f2" style="font-size:24.5px;" stroke="#f2f2f2" stroke-width="0.3">y: 0,333</text>
<text transform="translate(14.90,801.30) scale(1.0398,1)" fill="#f2f2f2" style="font-size:24.5px;" stroke="#f2f2f2" stroke-width="0.3">fL: 133,235</text>
<text transform="translate(14.90,843.10) scale(1.0852,1)" fill="#f2f2f2" style="font-size:24.5px;" stroke="#f2f2f2" stroke-width="0.3">cd/m²: 456,497</text>
<rect x="337" y="642.3" width="301" height="221" fill="#e6e6e6"/>
<rect x="343.6" y="649.0" width="287.9" height="209.6" fill="#323232"/>
<clipPath id="cc"><rect x="382.5" y="652.2" width="245.30" height="177.20"/></clipPath>
<g clip-path="url(#cc)" shape-rendering="crispEdges">
<rect x="382" y="652" width="247" height="3" fill="url(#c0)"/>
<rect x="382" y="655" width="247" height="3" fill="url(#c1)"/>
<rect x="382" y="658" width="247" height="3" fill="url(#c2)"/>
<rect x="382" y="661" width="247" height="3" fill="url(#c3)"/>
<rect x="382" y="664" width="247" height="3" fill="url(#c4)"/>
<rect x="382" y="667" width="247" height="3" fill="url(#c5)"/>
<rect x="382" y="670" width="247" height="3" fill="url(#c6)"/>
<rect x="382" y="673" width="247" height="3" fill="url(#c7)"/>
<rect x="382" y="676" width="247" height="3" fill="url(#c8)"/>
<rect x="382" y="679" width="247" height="3" fill="url(#c9)"/>
<rect x="382" y="682" width="247" height="3" fill="url(#c10)"/>
<rect x="382" y="685" width="247" height="3" fill="url(#c11)"/>
<rect x="382" y="688" width="247" height="3" fill="url(#c12)"/>
<rect x="382" y="691" width="247" height="3" fill="url(#c13)"/>
<rect x="382" y="694" width="247" height="3" fill="url(#c14)"/>
<rect x="382" y="697" width="247" height="3" fill="url(#c15)"/>
<rect x="382" y="700" width="247" height="3" fill="url(#c16)"/>
<rect x="382" y="703" width="247" height="3" fill="url(#c17)"/>
<rect x="382" y="706" width="247" height="3" fill="url(#c18)"/>
<rect x="382" y="709" width="247" height="3" fill="url(#c19)"/>
<rect x="382" y="712" width="247" height="3" fill="url(#c20)"/>
<rect x="382" y="715" width="247" height="3" fill="url(#c21)"/>
<rect x="382" y="718" width="247" height="3" fill="url(#c22)"/>
<rect x="382" y="721" width="247" height="3" fill="url(#c23)"/>
<rect x="382" y="724" width="247" height="3" fill="url(#c24)"/>
<rect x="382" y="727" width="247" height="3" fill="url(#c25)"/>
<rect x="382" y="730" width="247" height="3" fill="url(#c26)"/>
<rect x="382" y="733" width="247" height="3" fill="url(#c27)"/>
<rect x="382" y="736" width="247" height="3" fill="url(#c28)"/>
<rect x="382" y="739" width="247" height="3" fill="url(#c29)"/>
<rect x="382" y="742" width="247" height="3" fill="url(#c30)"/>
<rect x="382" y="745" width="247" height="3" fill="url(#c31)"/>
<rect x="382" y="748" width="247" height="3" fill="url(#c32)"/>
<rect x="382" y="751" width="247" height="3" fill="url(#c33)"/>
<rect x="382" y="754" width="247" height="3" fill="url(#c34)"/>
<rect x="382" y="757" width="247" height="3" fill="url(#c35)"/>
<rect x="382" y="760" width="247" height="3" fill="url(#c36)"/>
<rect x="382" y="763" width="247" height="3" fill="url(#c37)"/>
<rect x="382" y="766" width="247" height="3" fill="url(#c38)"/>
<rect x="382" y="769" width="247" height="3" fill="url(#c39)"/>
<rect x="382" y="772" width="247" height="3" fill="url(#c40)"/>
<rect x="382" y="775" width="247" height="3" fill="url(#c41)"/>
<rect x="382" y="778" width="247" height="3" fill="url(#c42)"/>
<rect x="382" y="781" width="247" height="3" fill="url(#c43)"/>
<rect x="382" y="784" width="247" height="3" fill="url(#c44)"/>
<rect x="382" y="787" width="247" height="3" fill="url(#c45)"/>
<rect x="382" y="790" width="247" height="3" fill="url(#c46)"/>
<rect x="382" y="793" width="247" height="3" fill="url(#c47)"/>
<rect x="382" y="796" width="247" height="3" fill="url(#c48)"/>
<rect x="382" y="799" width="247" height="3" fill="url(#c49)"/>
<rect x="382" y="802" width="247" height="3" fill="url(#c50)"/>
<rect x="382" y="805" width="247" height="3" fill="url(#c51)"/>
<rect x="382" y="808" width="247" height="3" fill="url(#c52)"/>
<rect x="382" y="811" width="247" height="3" fill="url(#c53)"/>
<rect x="382" y="814" width="247" height="3" fill="url(#c54)"/>
<rect x="382" y="817" width="247" height="3" fill="url(#c55)"/>
<rect x="382" y="820" width="247" height="3" fill="url(#c56)"/>
<rect x="382" y="823" width="247" height="3" fill="url(#c57)"/>
<rect x="382" y="826" width="247" height="3" fill="url(#c58)"/>
<rect x="382" y="829" width="247" height="1" fill="url(#c59)"/>
</g>
<rect x="382.5" y="652.2" width="245.30" height="177.20" fill="none" stroke="#9a9a9a" stroke-width="1.4"/>
<polyline clip-path="url(#cc)" points="415.7,828.5 425.5,820.8 435.3,813.2 445.1,805.7 454.9,798.3 464.7,791.0 474.5,783.8 484.3,776.7 494.1,769.6 503.9,762.6 513.8,755.7 523.6,748.9 533.4,742.2 543.2,735.6 553.0,729.0 562.8,722.5 572.6,716.1 582.4,709.8 592.2,703.6 602.0,697.4 611.9,691.3 621.7,685.3 627.5,681.8" stroke="#000" stroke-width="2.8" fill="none"/>
<circle cx="463.8" cy="717.7" r="4.55" fill="#1c1c1c" stroke="#000" stroke-width="0.75"/>
<circle cx="474.5" cy="702.8" r="4.55" fill="#333" stroke="#000" stroke-width="0.75"/>
<circle cx="474.9" cy="704.3" r="4.55" fill="#4d4d4d" stroke="#000" stroke-width="0.75"/>
<circle cx="475.1" cy="705.8" r="4.55" fill="#676767" stroke="#000" stroke-width="0.75"/>
<circle cx="475.3" cy="707.3" r="4.55" fill="#808080" stroke="#000" stroke-width="0.75"/>
<circle cx="475.4" cy="708.8" r="4.55" fill="#9a9a9a" stroke="#000" stroke-width="0.75"/>
<circle cx="475.4" cy="710.4" r="4.55" fill="#b3b3b3" stroke="#000" stroke-width="0.75"/>
<circle cx="475.3" cy="712.4" r="4.55" fill="#ccc" stroke="#000" stroke-width="0.75"/>
<circle cx="472.4" cy="717.1" r="4.55" fill="#e6e6e6" stroke="#000" stroke-width="0.75"/>
<circle cx="463.9" cy="727.0" r="4.55" fill="#fcfcfc" stroke="#000" stroke-width="0.75"/>
<rect x="498.1" y="734" width="12.9" height="12.9" fill="#fff" stroke="#000" stroke-width="2"/>
<path d="M377.0 666.6H382.5 M377.0 702.9H382.5 M377.0 737.6H382.5 M377.0 772.6H382.5 M377.0 807.7H382.5 M392.6 829.4v5.5 M441.7 829.4v5.5 M490.7 829.4v5.5 M539.8 829.4v5.5 M588.8 829.4v5.5" stroke="#dcdcdc" stroke-width="1.4" fill="none"/>
<text transform="translate(346.80,671.60) scale(1.0105,1)" fill="#d6d6d6" style="font-size:14.6px;" stroke="#d6d6d6" stroke-width="0.2">0,35</text>
<text transform="translate(346.80,707.90) scale(1.0105,1)" fill="#d6d6d6" style="font-size:14.6px;" stroke="#d6d6d6" stroke-width="0.2">0,34</text>
<text transform="translate(346.80,742.90) scale(1.0105,1)" fill="#d6d6d6" style="font-size:14.6px;" stroke="#d6d6d6" stroke-width="0.2">0,33</text>
<text transform="translate(346.80,777.80) scale(1.0105,1)" fill="#d6d6d6" style="font-size:14.6px;" stroke="#d6d6d6" stroke-width="0.2">0,32</text>
<text transform="translate(346.80,814.60) scale(1.0105,1)" fill="#d6d6d6" style="font-size:14.6px;" stroke="#d6d6d6" stroke-width="0.2">0,31</text>
<text transform="translate(377.64,851.30) scale(1.0500,1)" fill="#d6d6d6" style="font-size:14.6px;" stroke="#d6d6d6" stroke-width="0.2">0,29</text>
<text transform="translate(430.95,851.30) scale(1.0500,1)" fill="#d6d6d6" style="font-size:14.6px;" stroke="#d6d6d6" stroke-width="0.2">0,3</text>
<text transform="translate(475.74,851.30) scale(1.0500,1)" fill="#d6d6d6" style="font-size:14.6px;" stroke="#d6d6d6" stroke-width="0.2">0,31</text>
<text transform="translate(524.79,851.30) scale(1.0500,1)" fill="#d6d6d6" style="font-size:14.6px;" stroke="#d6d6d6" stroke-width="0.2">0,32</text>
<text transform="translate(573.84,851.30) scale(1.0500,1)" fill="#d6d6d6" style="font-size:14.6px;" stroke="#d6d6d6" stroke-width="0.2">0,33</text>
<rect x="640.3" y="643.2" width="903.2" height="28.8" fill="url(#th)"/>
<rect x="640.3" y="643.2" width="13.7" height="28.8" fill="#000"/>
<rect x="640.3" y="672.0" width="903.2" height="26.9" fill="#424242"/>
<rect x="640.3" y="672.0" width="13.7" height="26.9" fill="#2b2b2b"/>
<text transform="translate(657.80,691.90) scale(0.9058,1)" fill="#ebebeb" style="font-size:16.2px;">x: CIE31</text>
<text transform="translate(791.80,691.90) scale(0.9750,1)" fill="#ebebeb" style="font-size:16.2px;">0,27</text>
<text transform="translate(869.20,691.90) scale(0.9750,1)" fill="#ebebeb" style="font-size:16.2px;">0,30</text>
<text transform="translate(937.07,691.90) scale(0.9750,1)" fill="#ebebeb" style="font-size:16.2px;">0,31</text>
<text transform="translate(1004.94,691.90) scale(0.9750,1)" fill="#ebebeb" style="font-size:16.2px;">0,31</text>
<text transform="translate(1072.81,691.90) scale(0.9750,1)" fill="#ebebeb" style="font-size:16.2px;">0,31</text>
<text transform="translate(1140.68,691.90) scale(0.9750,1)" fill="#ebebeb" style="font-size:16.2px;">0,31</text>
<text transform="translate(1208.55,691.90) scale(0.9750,1)" fill="#ebebeb" style="font-size:16.2px;">0,31</text>
<text transform="translate(1276.42,691.90) scale(0.9750,1)" fill="#ebebeb" style="font-size:16.2px;">0,31</text>
<text transform="translate(1344.29,691.90) scale(0.9750,1)" fill="#ebebeb" style="font-size:16.2px;">0,31</text>
<text transform="translate(1412.16,691.90) scale(0.9750,1)" fill="#ebebeb" style="font-size:16.2px;">0,31</text>
<text transform="translate(1480.03,691.90) scale(0.9750,1)" fill="#ebebeb" style="font-size:16.2px;">0,30</text>
<rect x="640.3" y="698.9" width="903.2" height="26.3" fill="#808080"/>
<rect x="640.3" y="698.9" width="13.7" height="26.3" fill="#3a3a3a"/>
<text transform="translate(657.80,717.80) scale(0.9058,1)" fill="#ebebeb" style="font-size:16.2px;">y: CIE31</text>
<text transform="translate(791.80,717.80) scale(0.9750,1)" fill="#ebebeb" style="font-size:16.2px;">0,29</text>
<text transform="translate(869.20,717.80) scale(0.9750,1)" fill="#ebebeb" style="font-size:16.2px;">0,34</text>
<text transform="translate(937.07,717.80) scale(0.9750,1)" fill="#ebebeb" style="font-size:16.2px;">0,34</text>
<text transform="translate(1004.94,717.80) scale(0.9750,1)" fill="#ebebeb" style="font-size:16.2px;">0,34</text>
<text transform="translate(1072.81,717.80) scale(0.9750,1)" fill="#ebebeb" style="font-size:16.2px;">0,34</text>
<text transform="translate(1140.68,717.80) scale(0.9750,1)" fill="#ebebeb" style="font-size:16.2px;">0,34</text>
<text transform="translate(1208.55,717.80) scale(0.9750,1)" fill="#ebebeb" style="font-size:16.2px;">0,34</text>
<text transform="translate(1276.42,717.80) scale(0.9750,1)" fill="#ebebeb" style="font-size:16.2px;">0,34</text>
<text transform="translate(1344.29,717.80) scale(0.9750,1)" fill="#ebebeb" style="font-size:16.2px;">0,34</text>
<text transform="translate(1412.16,717.80) scale(0.9750,1)" fill="#ebebeb" style="font-size:16.2px;">0,34</text>
<text transform="translate(1480.03,717.80) scale(0.9750,1)" fill="#ebebeb" style="font-size:16.2px;">0,33</text>
<rect x="640.3" y="725.2" width="903.2" height="26.8" fill="#424242"/>
<rect x="640.3" y="725.2" width="13.7" height="26.8" fill="#2b2b2b"/>
<text x="657.80" y="744.70" fill="#ebebeb" style="font-size:16.2px;">Y</text>
<text transform="translate(791.80,744.70) scale(0.9750,1)" fill="#ebebeb" style="font-size:16.2px;">0,32</text>
<text transform="translate(869.20,744.70) scale(0.9750,1)" fill="#ebebeb" style="font-size:16.2px;">3,67</text>
<text transform="translate(937.07,744.70) scale(0.9750,1)" fill="#ebebeb" style="font-size:16.2px;">13,44</text>
<text transform="translate(1004.94,744.70) scale(0.9750,1)" fill="#ebebeb" style="font-size:16.2px;">30,97</text>
<text transform="translate(1072.81,744.70) scale(0.9750,1)" fill="#ebebeb" style="font-size:16.2px;">58,28</text>
<text transform="translate(1140.68,744.70) scale(0.9750,1)" fill="#ebebeb" style="font-size:16.2px;">97,20</text>
<text transform="translate(1208.55,744.70) scale(0.9750,1)" fill="#ebebeb" style="font-size:16.2px;">142,63</text>
<text transform="translate(1276.42,744.70) scale(0.9750,1)" fill="#ebebeb" style="font-size:16.2px;">201,49</text>
<text transform="translate(1344.29,744.70) scale(0.9750,1)" fill="#ebebeb" style="font-size:16.2px;">276,72</text>
<text transform="translate(1412.16,744.70) scale(0.9750,1)" fill="#ebebeb" style="font-size:16.2px;">360,23</text>
<text transform="translate(1480.03,744.70) scale(0.9750,1)" fill="#ebebeb" style="font-size:16.2px;">456,50</text>
<rect x="640.3" y="752.0" width="903.2" height="26.8" fill="#808080"/>
<rect x="640.3" y="752.0" width="13.7" height="26.8" fill="#3a3a3a"/>
<text transform="translate(657.80,771.80) scale(0.9876,1)" fill="#ebebeb" style="font-size:16.2px;">Target Y</text>
<text transform="translate(791.80,771.80) scale(0.9750,1)" fill="#ebebeb" style="font-size:16.2px;">0,00</text>
<text transform="translate(869.20,771.80) scale(0.9750,1)" fill="#ebebeb" style="font-size:16.2px;">4,72</text>
<text transform="translate(937.07,771.80) scale(0.9750,1)" fill="#ebebeb" style="font-size:16.2px;">15,11</text>
<text transform="translate(1004.94,771.80) scale(0.9750,1)" fill="#ebebeb" style="font-size:16.2px;">32,99</text>
<text transform="translate(1072.81,771.80) scale(0.9750,1)" fill="#ebebeb" style="font-size:16.2px;">60,65</text>
<text transform="translate(1140.68,771.80) scale(0.9750,1)" fill="#ebebeb" style="font-size:16.2px;">98,54</text>
<text transform="translate(1208.55,771.80) scale(0.9750,1)" fill="#ebebeb" style="font-size:16.2px;">145,42</text>
<text transform="translate(1276.42,771.80) scale(0.9750,1)" fill="#ebebeb" style="font-size:16.2px;">203,23</text>
<text transform="translate(1344.29,771.80) scale(0.9750,1)" fill="#ebebeb" style="font-size:16.2px;">275,65</text>
<text transform="translate(1412.16,771.80) scale(0.9750,1)" fill="#ebebeb" style="font-size:16.2px;">361,22</text>
<text transform="translate(1480.03,771.80) scale(0.9750,1)" fill="#ebebeb" style="font-size:16.2px;">456,50</text>
<rect x="640.3" y="778.8" width="903.2" height="26.5" fill="#424242"/>
<rect x="640.3" y="778.8" width="13.7" height="26.5" fill="#2b2b2b"/>
<text transform="translate(657.80,797.90) scale(1.0248,1)" fill="#ebebeb" style="font-size:16.2px;">Gamma Log/Log</text>
<text transform="translate(791.80,797.90) scale(0.9750,1)" fill="#ebebeb" style="font-size:16.2px;">1,28</text>
<text transform="translate(869.20,797.90) scale(0.9750,1)" fill="#ebebeb" style="font-size:16.2px;">2,11</text>
<text transform="translate(937.07,797.90) scale(0.9750,1)" fill="#ebebeb" style="font-size:16.2px;">2,19</text>
<text transform="translate(1004.94,797.90) scale(0.9750,1)" fill="#ebebeb" style="font-size:16.2px;">2,22</text>
<text transform="translate(1072.81,797.90) scale(0.9750,1)" fill="#ebebeb" style="font-size:16.2px;">2,25</text>
<text transform="translate(1140.68,797.90) scale(0.9750,1)" fill="#ebebeb" style="font-size:16.2px;">2,24</text>
<text transform="translate(1208.55,797.90) scale(0.9750,1)" fill="#ebebeb" style="font-size:16.2px;">2,28</text>
<text transform="translate(1276.42,797.90) scale(0.9750,1)" fill="#ebebeb" style="font-size:16.2px;">2,28</text>
<text transform="translate(1344.29,797.90) scale(0.9750,1)" fill="#ebebeb" style="font-size:16.2px;">2,24</text>
<text transform="translate(1412.16,797.90) scale(0.9750,1)" fill="#ebebeb" style="font-size:16.2px;">2,30</text>
<text transform="translate(1480.03,797.90) scale(0.9750,1)" fill="#ebebeb" style="font-size:16.2px;">2,27</text>
<rect x="640.3" y="805.3" width="903.2" height="26.5" fill="#808080"/>
<rect x="640.3" y="805.3" width="13.7" height="26.5" fill="#3a3a3a"/>
<text transform="translate(657.80,824.50) scale(0.8360,1)" fill="#ebebeb" style="font-size:16.2px;">CCT</text>
<text transform="translate(791.80,824.50) scale(0.9750,1)" fill="#ebebeb" style="font-size:16.2px;">10770,00</text>
<text transform="translate(869.20,824.50) scale(0.9750,1)" fill="#ebebeb" style="font-size:16.2px;">6902,00</text>
<text transform="translate(937.07,824.50) scale(0.9750,1)" fill="#ebebeb" style="font-size:16.2px;">6761,00</text>
<text transform="translate(1004.94,824.50) scale(0.9750,1)" fill="#ebebeb" style="font-size:16.2px;">6743,00</text>
<text transform="translate(1072.81,824.50) scale(0.9750,1)" fill="#ebebeb" style="font-size:16.2px;">6741,00</text>
<text transform="translate(1140.68,824.50) scale(0.9750,1)" fill="#ebebeb" style="font-size:16.2px;">6742,00</text>
<text transform="translate(1208.55,824.50) scale(0.9750,1)" fill="#ebebeb" style="font-size:16.2px;">6744,00</text>
<text transform="translate(1276.42,824.50) scale(0.9750,1)" fill="#ebebeb" style="font-size:16.2px;">6754,00</text>
<text transform="translate(1344.29,824.50) scale(0.9750,1)" fill="#ebebeb" style="font-size:16.2px;">6770,00</text>
<text transform="translate(1412.16,824.50) scale(0.9750,1)" fill="#ebebeb" style="font-size:16.2px;">6803,00</text>
<text transform="translate(1480.03,824.50) scale(0.9750,1)" fill="#ebebeb" style="font-size:16.2px;">6931,00</text>
<rect x="640.3" y="831.8" width="903.2" height="26.2" fill="#424242"/>
<rect x="640.3" y="831.8" width="13.7" height="26.2" fill="#2b2b2b"/>
<text transform="translate(657.80,850.90) scale(0.9619,1)" fill="#ebebeb" style="font-size:16.2px;">ΔE 2000</text>
<text transform="translate(791.80,850.90) scale(0.9750,1)" fill="#ebebeb" style="font-size:16.2px;">0,57</text>
<text transform="translate(869.20,850.90) scale(0.9750,1)" fill="#ebebeb" style="font-size:16.2px;">2,35</text>
<text transform="translate(937.07,850.90) scale(0.9750,1)" fill="#ebebeb" style="font-size:16.2px;">3,83</text>
<text transform="translate(1004.94,850.90) scale(0.9750,1)" fill="#ebebeb" style="font-size:16.2px;">4,86</text>
<text transform="translate(1072.81,850.90) scale(0.9750,1)" fill="#ebebeb" style="font-size:16.2px;">5,75</text>
<text transform="translate(1140.68,850.90) scale(0.9750,1)" fill="#ebebeb" style="font-size:16.2px;">6,44</text>
<text transform="translate(1208.55,850.90) scale(0.9750,1)" fill="#ebebeb" style="font-size:16.2px;">6,95</text>
<text transform="translate(1276.42,850.90) scale(0.9750,1)" fill="#ebebeb" style="font-size:16.2px;">7,32</text>
<text transform="translate(1344.29,850.90) scale(0.9750,1)" fill="#ebebeb" style="font-size:16.2px;">7,61</text>
<text transform="translate(1412.16,850.90) scale(0.9750,1)" fill="#ebebeb" style="font-size:16.2px;">7,77</text>
<text transform="translate(1480.03,850.90) scale(0.9750,1)" fill="#ebebeb" style="font-size:16.2px;">7,96</text>
<text x="791.80" y="662.80" fill="#fff" style="font-size:14.3px;" stroke="#fff" stroke-width="0.2">0</text>
<text x="869.20" y="662.80" fill="#fff" style="font-size:14.3px;" stroke="#fff" stroke-width="0.2">10</text>
<text x="937.07" y="662.80" fill="#fff" style="font-size:14.3px;" stroke="#fff" stroke-width="0.2">20</text>
<text x="1004.94" y="662.80" fill="#fff" style="font-size:14.3px;" stroke="#fff" stroke-width="0.2">30</text>
<text x="1072.81" y="662.80" fill="#fff" style="font-size:14.3px;" stroke="#fff" stroke-width="0.2">40</text>
<text x="1140.68" y="662.80" fill="#fff" style="font-size:14.3px;" stroke="#fff" stroke-width="0.2">50</text>
<text x="1208.55" y="662.80" fill="#fff" style="font-size:14.3px;" stroke="#fff" stroke-width="0.2">60</text>
<text x="1276.42" y="662.80" fill="#fff" style="font-size:14.3px;" stroke="#fff" stroke-width="0.2">70</text>
<text x="1344.29" y="662.80" fill="#fff" style="font-size:14.3px;" stroke="#fff" stroke-width="0.2">80</text>
<text x="1412.16" y="662.80" fill="#fff" style="font-size:14.3px;" stroke="#fff" stroke-width="0.2">90</text>
<text x="1480.03" y="662.80" fill="#fff" style="font-size:14.3px;" stroke="#fff" stroke-width="0.2">100</text>
</svg>
</body></html>
